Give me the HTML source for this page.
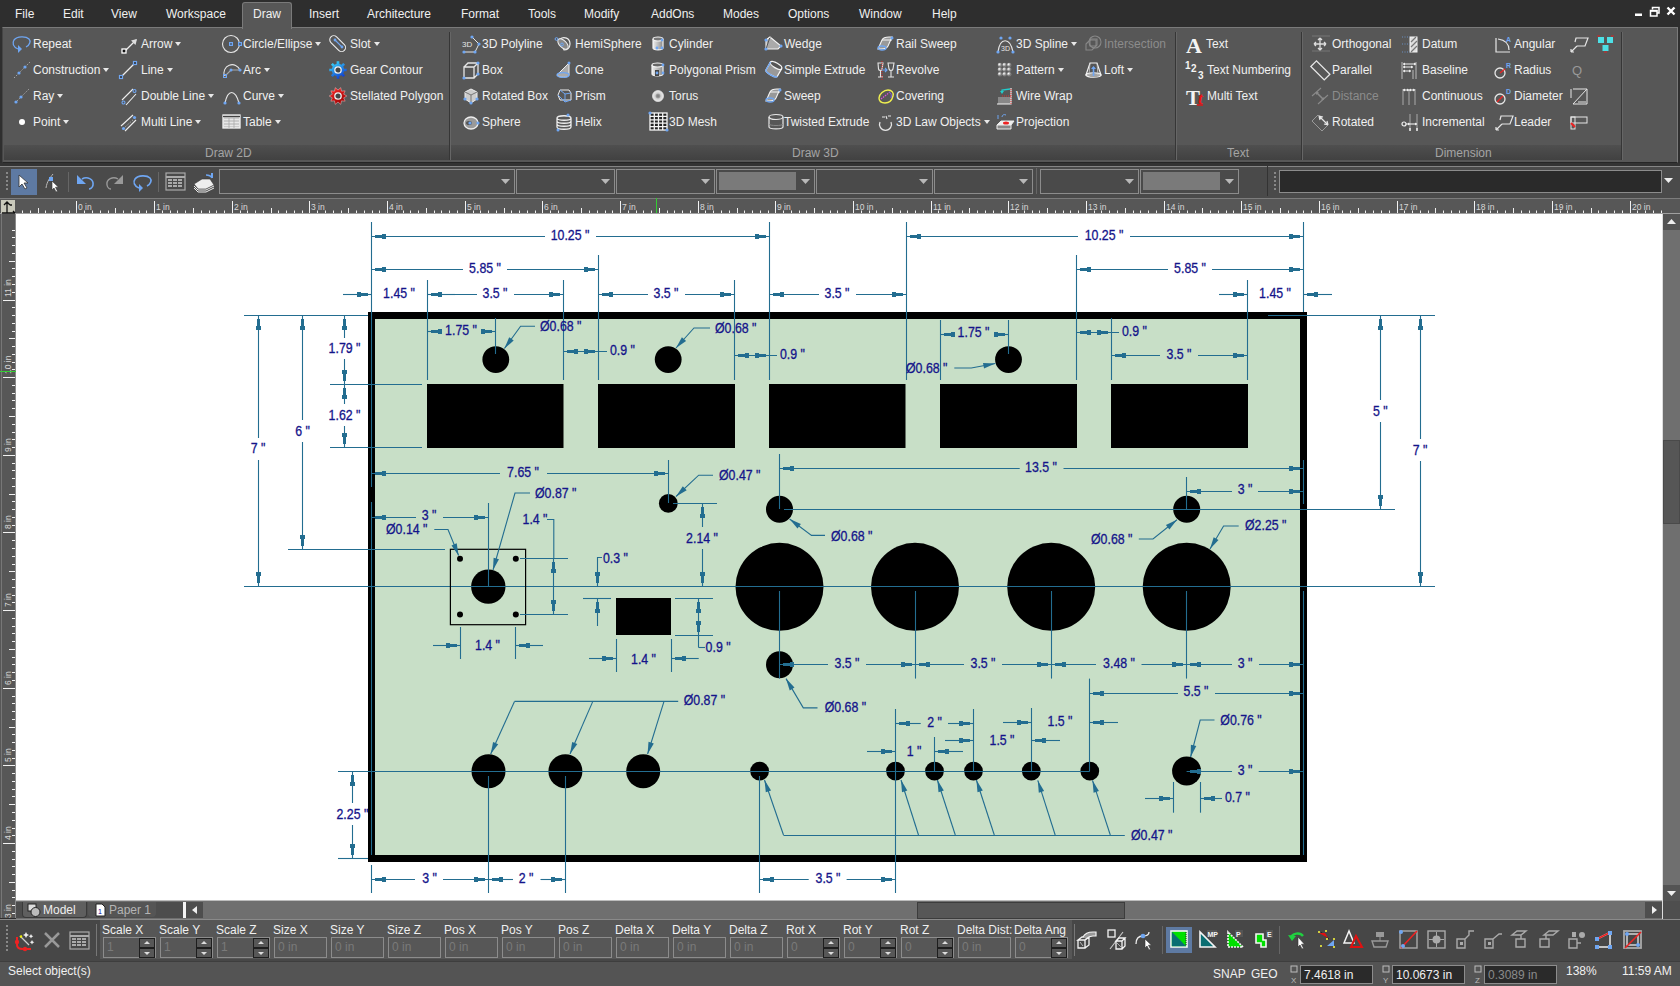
<!DOCTYPE html><html><head><meta charset="utf-8"><style>
*{box-sizing:border-box;margin:0;padding:0}
html,body{width:1680px;height:986px;overflow:hidden;background:#2e2e2e;font-family:"Liberation Sans",sans-serif;font-size:12px;color:#f0f0f0}
.ab{position:absolute}
.t{position:absolute;white-space:nowrap;line-height:14px}
.drw{position:absolute;left:0;top:0}
svg.ic{position:absolute;overflow:visible}
</style></head><body><div class="ab" style="left:0px;top:0px;width:1680px;height:27px;background:#2e2e2e"></div><div class="t" style="left:15px;top:7px;">File</div><div class="t" style="left:63px;top:7px;">Edit</div><div class="t" style="left:111px;top:7px;">View</div><div class="t" style="left:166px;top:7px;">Workspace</div><div class="t" style="left:309px;top:7px;">Insert</div><div class="t" style="left:367px;top:7px;">Architecture</div><div class="t" style="left:461px;top:7px;">Format</div><div class="t" style="left:528px;top:7px;">Tools</div><div class="t" style="left:584px;top:7px;">Modify</div><div class="t" style="left:651px;top:7px;">AddOns</div><div class="t" style="left:723px;top:7px;">Modes</div><div class="t" style="left:788px;top:7px;">Options</div><div class="t" style="left:859px;top:7px;">Window</div><div class="t" style="left:932px;top:7px;">Help</div><svg class="ic" style="left:1634px;top:0px" width="46" height="20" viewBox="0 0 46 20"><rect x="1" y="13.5" width="7" height="2.5" fill="#fff"/><path d="M18.5 9.5V7.5h6.5v5.5h-2" fill="none" stroke="#fff" stroke-width="1.5"/><rect x="16.5" y="10.5" width="6.5" height="5.5" fill="none" stroke="#fff" stroke-width="1.5"/><rect x="16" y="10" width="7.5" height="1.8" fill="#fff"/><path d="M33.5 7.5l7 7M40.5 7.5l-7 7" stroke="#fff" stroke-width="2.4"/></svg><div class="ab" style="left:0px;top:27px;width:1680px;height:139px;background:#2f2f2f"></div><div class="ab" style="left:2px;top:27px;width:1676px;height:136px;background:#575757;border:1px solid #7a7a7a;border-left-color:#454545;border-bottom:1px solid #262626"></div><div class="ab" style="left:242px;top:2px;width:50px;height:27px;background:#575757;border:1px solid #7a7a7a;border-bottom:none;border-radius:3px 3px 0 0"></div><div class="t" style="left:253px;top:7px;">Draw</div><div class="ab" style="left:4px;top:145px;width:1617px;height:15px;background:linear-gradient(#4f4f4f,#414141)"></div><div class="ab" style="left:449px;top:32px;width:2px;height:128px;background:#363636;border-right:1px solid #666"></div><div class="ab" style="left:1175px;top:32px;width:2px;height:128px;background:#363636;border-right:1px solid #666"></div><div class="ab" style="left:1301px;top:32px;width:2px;height:128px;background:#363636;border-right:1px solid #666"></div><div class="ab" style="left:1621px;top:32px;width:2px;height:128px;background:#363636;border-right:1px solid #666"></div><div class="t" style="left:205px;top:146px;color:#a4a4a4">Draw 2D</div><div class="t" style="left:792px;top:146px;color:#a4a4a4">Draw 3D</div><div class="t" style="left:1227px;top:146px;color:#a4a4a4">Text</div><div class="t" style="left:1435px;top:146px;color:#a4a4a4">Dimension</div><svg class="ic" style="left:12px;top:35px" width="20" height="18" viewBox="0 0 20 18"><path d="M6 14C1 12 0 8 2 5 5 1 14 1 17 4c2 2 1 6-3 8" fill="none" stroke="#6fa6f2" stroke-width="1.3"/><path d="M6 10v8l4-4z" fill="#6fa6f2"/></svg><div class="t" style="left:33px;top:37px;">Repeat</div><svg class="ic" style="left:12px;top:61px" width="20" height="18" viewBox="0 0 20 18"><path d="M2 17L18 1" stroke="#aaa" stroke-width="1" stroke-dasharray="1.5 1.5"/><circle cx="7" cy="12" r="1.6" fill="#6fa6f2"/><circle cx="13" cy="6" r="1.6" fill="#6fa6f2"/></svg><div class="t" style="left:33px;top:63px;">Construction<span style="display:inline-block;width:0;height:0;border-left:3.5px solid transparent;border-right:3.5px solid transparent;border-top:4px solid #e8e8e8;margin-left:3px;vertical-align:2px"></span></div><svg class="ic" style="left:12px;top:87px" width="20" height="18" viewBox="0 0 20 18"><path d="M3 16L17 2" stroke="#aaa" stroke-width="1" stroke-dasharray="1.5 1.5"/><circle cx="4" cy="15" r="1.6" fill="#6fa6f2"/><circle cx="9" cy="10" r="1.6" fill="#6fa6f2"/></svg><div class="t" style="left:33px;top:89px;">Ray<span style="display:inline-block;width:0;height:0;border-left:3.5px solid transparent;border-right:3.5px solid transparent;border-top:4px solid #e8e8e8;margin-left:3px;vertical-align:2px"></span></div><svg class="ic" style="left:12px;top:113px" width="20" height="18" viewBox="0 0 20 18"><circle cx="10" cy="9" r="3" fill="#fff"/></svg><div class="t" style="left:33px;top:115px;">Point<span style="display:inline-block;width:0;height:0;border-left:3.5px solid transparent;border-right:3.5px solid transparent;border-top:4px solid #e8e8e8;margin-left:3px;vertical-align:2px"></span></div><svg class="ic" style="left:123px;top:36.5px" width="20" height="18" viewBox="0 0 20 18"><path d="M2 14L13 3" stroke="#eee" stroke-width="1.2"/><path d="M14 2l-6 1.5 4.5 4.5z" fill="#ddd"/><rect x="-1" y="12" width="4" height="4" fill="#111" stroke="#fff" stroke-width="1.3"/></svg><div class="t" style="left:141px;top:37px;">Arrow<span style="display:inline-block;width:0;height:0;border-left:3.5px solid transparent;border-right:3.5px solid transparent;border-top:4px solid #e8e8e8;margin-left:3px;vertical-align:2px"></span></div><svg class="ic" style="left:123px;top:62.5px" width="20" height="18" viewBox="0 0 20 18"><path d="M-2 14L12 0" stroke="#eee" stroke-width="1.2"/><rect x="-3.5" y="12.5" width="3" height="3" fill="#333" stroke="#6fa6f2" stroke-width="1.2"/><rect x="10.5" y="-1.5" width="3" height="3" fill="#333" stroke="#6fa6f2" stroke-width="1.2"/></svg><div class="t" style="left:141px;top:63px;">Line<span style="display:inline-block;width:0;height:0;border-left:3.5px solid transparent;border-right:3.5px solid transparent;border-top:4px solid #e8e8e8;margin-left:3px;vertical-align:2px"></span></div><svg class="ic" style="left:123px;top:88.5px" width="20" height="18" viewBox="0 0 20 18"><path d="M-1 11L10 0M3 16L13 5" stroke="#eee" stroke-width="1.1"/><circle cx="0.5" cy="13.5" r="1.5" fill="none" stroke="#6fa6f2" stroke-width="1.1"/><circle cx="11.5" cy="2" r="1.5" fill="none" stroke="#6fa6f2" stroke-width="1.1"/></svg><div class="t" style="left:141px;top:89px;">Double Line<span style="display:inline-block;width:0;height:0;border-left:3.5px solid transparent;border-right:3.5px solid transparent;border-top:4px solid #e8e8e8;margin-left:3px;vertical-align:2px"></span></div><svg class="ic" style="left:123px;top:114.5px" width="20" height="18" viewBox="0 0 20 18"><path d="M-2 11L10 0M2 16L13 5" stroke="#eee" stroke-width="1.1"/><path d="M0 14L12 3" stroke="#ccc" stroke-dasharray="1 1.5"/><circle cx="0.5" cy="13.5" r="1.6" fill="#6fa6f2"/><circle cx="11.5" cy="2.5" r="1.6" fill="#6fa6f2"/></svg><div class="t" style="left:141px;top:115px;">Multi Line<span style="display:inline-block;width:0;height:0;border-left:3.5px solid transparent;border-right:3.5px solid transparent;border-top:4px solid #e8e8e8;margin-left:3px;vertical-align:2px"></span></div><svg class="ic" style="left:222px;top:35px" width="20" height="18" viewBox="0 0 20 18"><circle cx="9" cy="9" r="8.5" fill="none" stroke="#e6e6e6" stroke-width="1.1"/><rect x="7" y="7" width="4" height="4" fill="#6fa6f2"/><rect x="8.3" y="8.3" width="1.4" height="1.4" fill="#333"/><rect x="16" y="7" width="4" height="4" fill="#6fa6f2"/><rect x="17.3" y="8.3" width="1.4" height="1.4" fill="#333"/></svg><div class="t" style="left:243px;top:37px;">Circle/Ellipse<span style="display:inline-block;width:0;height:0;border-left:3.5px solid transparent;border-right:3.5px solid transparent;border-top:4px solid #e8e8e8;margin-left:3px;vertical-align:2px"></span></div><svg class="ic" style="left:222px;top:61px" width="20" height="18" viewBox="0 0 20 18"><path d="M2.5 15A8 8 0 1 1 18 9" fill="none" stroke="#e6e6e6" stroke-width="1.1"/><path d="M3 15L9 9H18" stroke="#aaa" stroke-width="1.1" fill="none"/><rect x="1.5" y="13.5" width="3" height="3" fill="none" stroke="#6fa6f2"/><circle cx="9" cy="9" r="1.5" fill="#6fa6f2"/><circle cx="18" cy="9" r="1.6" fill="#6fa6f2"/></svg><div class="t" style="left:243px;top:63px;">Arc<span style="display:inline-block;width:0;height:0;border-left:3.5px solid transparent;border-right:3.5px solid transparent;border-top:4px solid #e8e8e8;margin-left:3px;vertical-align:2px"></span></div><svg class="ic" style="left:222px;top:87px" width="20" height="18" viewBox="0 0 20 18"><path d="M3 16C6 2 13 2 17 16" fill="none" stroke="#e6e6e6" stroke-width="1.2"/><circle cx="3" cy="16" r="1.6" fill="#6fa6f2"/><circle cx="17" cy="16" r="1.6" fill="#6fa6f2"/></svg><div class="t" style="left:243px;top:89px;">Curve<span style="display:inline-block;width:0;height:0;border-left:3.5px solid transparent;border-right:3.5px solid transparent;border-top:4px solid #e8e8e8;margin-left:3px;vertical-align:2px"></span></div><svg class="ic" style="left:222px;top:113px" width="20" height="18" viewBox="0 0 20 18"><rect x="1" y="2" width="17" height="13" fill="#ccc" stroke="#f4f4f4" stroke-width="1.3"/><path d="M1 3.5h17" stroke="#444" stroke-width="1.3"/><path d="M2 6.5h15M2 9.5h15M2 12.5h15" stroke="#e8e8e8" stroke-width="1.2"/><path d="M7 5v10M12 5v10" stroke="#aaa" stroke-width="0.8"/></svg><div class="t" style="left:243px;top:115px;">Table<span style="display:inline-block;width:0;height:0;border-left:3.5px solid transparent;border-right:3.5px solid transparent;border-top:4px solid #e8e8e8;margin-left:3px;vertical-align:2px"></span></div><svg class="ic" style="left:329px;top:35px" width="20" height="18" viewBox="0 0 20 18"><rect x="5" y="-1" width="8" height="19" rx="4" transform="rotate(-45 9 9)" fill="none" stroke="#eee" stroke-width="1.1"/><path d="M6 5l7 7" stroke="#6fa6f2" stroke-width="1.1"/><circle cx="6" cy="5" r="1.4" fill="#6fa6f2"/><circle cx="13" cy="12" r="1.4" fill="#6fa6f2"/></svg><div class="t" style="left:350px;top:37px;">Slot<span style="display:inline-block;width:0;height:0;border-left:3.5px solid transparent;border-right:3.5px solid transparent;border-top:4px solid #e8e8e8;margin-left:3px;vertical-align:2px"></span></div><svg class="ic" style="left:329px;top:61px" width="20" height="18" viewBox="0 0 20 18"><defs><linearGradient id="ggr" x1="0" y1="0" x2="0.6" y2="1"><stop offset="0" stop-color="#40e8ff"/><stop offset="1" stop-color="#1040d0"/></linearGradient></defs><path d="M15.15 7.65L17.70 7.67L17.70 10.33L15.15 10.35L14.31 12.40L16.09 14.21L14.21 16.09L12.40 14.31L10.35 15.15L10.33 17.70L7.67 17.70L7.65 15.15L5.60 14.31L3.79 16.09L1.91 14.21L3.69 12.40L2.85 10.35L0.30 10.33L0.30 7.67L2.85 7.65L3.69 5.60L1.91 3.79L3.79 1.91L5.60 3.69L7.65 2.85L7.67 0.30L10.33 0.30L10.35 2.85L12.40 3.69L14.21 1.91L16.09 3.79L14.31 5.60Z" fill="url(#ggr)"/><circle cx="9" cy="9" r="3.2" fill="#444" stroke="#eee" stroke-width="1.3"/></svg><div class="t" style="left:350px;top:63px;">Gear Contour</div><svg class="ic" style="left:329px;top:87px" width="20" height="18" viewBox="0 0 20 18"><defs><linearGradient id="gst" x1="0" y1="0" x2="0.6" y2="1"><stop offset="0" stop-color="#ff3030"/><stop offset="1" stop-color="#a00000"/></linearGradient></defs><path d="M17.80 9.00L14.71 10.85L16.12 14.17L12.53 13.85L11.72 17.37L9.00 15.00L6.28 17.37L5.47 13.85L1.88 14.17L3.29 10.85L0.20 9.00L3.29 7.15L1.88 3.83L5.47 4.15L6.28 0.63L9.00 3.00L11.72 0.63L12.53 4.15L16.12 3.83L14.71 7.15Z" fill="url(#gst)" stroke="#f4c0c0" stroke-width="0.5"/><circle cx="9" cy="9" r="3.2" fill="#444" stroke="#eee" stroke-width="1.3"/></svg><div class="t" style="left:350px;top:89px;">Stellated Polygon</div><svg class="ic" style="left:462px;top:35px" width="20" height="18" viewBox="0 0 20 18"><text x="0" y="12" font-size="8" fill="#e6e6e6" font-family="Liberation Sans">3D</text><path d="M10 2l7 7-4 8H2" fill="none" stroke="#e6e6e6"/><circle cx="10" cy="2" r="1.6" fill="#6fa6f2"/><circle cx="17" cy="9" r="1.6" fill="#6fa6f2"/><circle cx="13" cy="17" r="1.6" fill="#6fa6f2"/><circle cx="2" cy="17" r="1.6" fill="#6fa6f2"/></svg><div class="t" style="left:482px;top:37px;">3D Polyline</div><svg class="ic" style="left:462px;top:61px" width="20" height="18" viewBox="0 0 20 18"><path d="M2 6h10v11H2zM2 6l4-4h10v11l-4 4M12 6l4-4" fill="none" stroke="#e6e6e6" stroke-width="1.3"/><circle cx="2" cy="17" r="1.6" fill="#6fa6f2"/><circle cx="16" cy="2" r="1.6" fill="#6fa6f2"/><circle cx="16" cy="13" r="1.6" fill="#6fa6f2"/></svg><div class="t" style="left:482px;top:63px;">Box</div><svg class="ic" style="left:462px;top:87px" width="20" height="18" viewBox="0 0 20 18"><path d="M9 2l6 3v7l-6 4-6-4V5z" fill="#ccc" stroke="#eee"/><path d="M3 5l6 3 6-3M9 8v8" stroke="#777" fill="none"/><circle cx="3" cy="12" r="1.6" fill="#6fa6f2"/><circle cx="15" cy="12" r="1.6" fill="#6fa6f2"/><circle cx="9" cy="16" r="1.6" fill="#6fa6f2"/></svg><div class="t" style="left:482px;top:89px;">Rotated Box</div><svg class="ic" style="left:462px;top:113px" width="20" height="18" viewBox="0 0 20 18"><ellipse cx="9" cy="10" rx="7" ry="6" fill="#9a9a9a" stroke="#eee" stroke-width="1.3"/><ellipse cx="7" cy="10" rx="3" ry="2" fill="#555"/><circle cx="8" cy="10" r="1.6" fill="#6fa6f2"/><circle cx="16" cy="10" r="1.6" fill="#6fa6f2"/></svg><div class="t" style="left:482px;top:115px;">Sphere</div><svg class="ic" style="left:555px;top:35px" width="20" height="18" viewBox="0 0 20 18"><path d="M5 4C9 1 15 3 15 9c0 4-3 6-6 6z" fill="none" stroke="#eee" stroke-width="1.2"/><ellipse cx="8" cy="9" rx="6.5" ry="3.5" transform="rotate(45 8 9)" fill="#888" stroke="#eee" stroke-width="1"/><circle cx="1.5" cy="4" r="1.4" fill="none" stroke="#6fa6f2"/><circle cx="7" cy="9.5" r="1.4" fill="none" stroke="#6fa6f2"/></svg><div class="t" style="left:575px;top:37px;">HemiSphere</div><svg class="ic" style="left:555px;top:61px" width="20" height="18" viewBox="0 0 20 18"><path d="M14 2L2 14c1 3 12 3 12 0z" fill="#aaa" stroke="#eee" stroke-width="1"/><ellipse cx="8" cy="14" rx="6" ry="2.3" fill="none" stroke="#6fa6f2" stroke-width="1.3"/><circle cx="14" cy="2" r="1.5" fill="#6fa6f2"/></svg><div class="t" style="left:575px;top:63px;">Cone</div><svg class="ic" style="left:555px;top:87px" width="20" height="18" viewBox="0 0 20 18"><path d="M5 3h9l2 3v7H5l-2-5z" fill="none" stroke="#eee" stroke-width="1"/><path d="M5 3l5 4 6-1M10 7v8M3 8l7 7 6-2" fill="none" stroke="#6fa6f2" stroke-width="1"/></svg><div class="t" style="left:575px;top:89px;">Prism</div><svg class="ic" style="left:555px;top:113px" width="20" height="18" viewBox="0 0 20 18"><path d="M2 5c0-3 14-3 14 0s-14 3-14 0M2 8c0 3 14 3 14 0M2 11c0 3 14 3 14 0M2 14c0 3 14 3 14 0M2 5v9M16 5v9" fill="none" stroke="#eee" stroke-width="1.3"/><circle cx="13" cy="2" r="1.5" fill="#6fa6f2"/><circle cx="3" cy="17" r="1.5" fill="#6fa6f2"/></svg><div class="t" style="left:575px;top:115px;">Helix</div><svg class="ic" style="left:649px;top:35px" width="20" height="18" viewBox="0 0 20 18"><defs><linearGradient id="gcy" x1="0" x2="1"><stop offset="0" stop-color="#eee"/><stop offset="1" stop-color="#888"/></linearGradient></defs><path d="M4 4v9c0 2.5 10 2.5 10 0V4" fill="url(#gcy)" stroke="#f4f4f4" stroke-width="1.2"/><ellipse cx="9" cy="4" rx="5" ry="2" fill="#777" stroke="#f4f4f4" stroke-width="1.2"/><circle cx="13" cy="5" r="1.4" fill="#6fa6f2"/><circle cx="8" cy="13" r="1.4" fill="#6fa6f2"/><circle cx="13" cy="13" r="1.4" fill="#6fa6f2"/></svg><div class="t" style="left:669px;top:37px;">Cylinder</div><svg class="ic" style="left:649px;top:61px" width="20" height="18" viewBox="0 0 20 18"><path d="M3 4v9c0 2.5 11 2.5 11 0V4" fill="url(#gcy)" stroke="#f4f4f4" stroke-width="1.2"/><ellipse cx="8.5" cy="4" rx="5.5" ry="2" fill="#666" stroke="#f4f4f4" stroke-width="1.2"/><path d="M6 9h4v6H6z" fill="#444"/><circle cx="14" cy="4" r="1.4" fill="#6fa6f2"/><circle cx="14" cy="12" r="1.4" fill="#6fa6f2"/><circle cx="8" cy="12" r="1.4" fill="#6fa6f2"/></svg><div class="t" style="left:669px;top:63px;">Polygonal Prism</div><svg class="ic" style="left:649px;top:87px" width="20" height="18" viewBox="0 0 20 18"><defs><radialGradient id="gto"><stop offset="0" stop-color="#777"/><stop offset="0.35" stop-color="#999"/><stop offset="0.5" stop-color="#ccc"/><stop offset="1" stop-color="#eee"/></radialGradient></defs><circle cx="9" cy="9" r="5.5" fill="url(#gto)" stroke="#ddd" stroke-width="0.8"/></svg><div class="t" style="left:669px;top:89px;">Torus</div><svg class="ic" style="left:649px;top:113px" width="20" height="18" viewBox="0 0 20 18"><rect x="1" y="0" width="17" height="17" fill="#222" stroke="#f4f4f4" stroke-width="1.3"/><path d="M5.3 0v17M9.5 0v17M13.7 0v17M1 3.4h17M1 6.8h17M1 10.2h17M1 13.6h17" stroke="#f4f4f4" stroke-width="1.3"/><circle cx="1" cy="0" r="1.6" fill="#6fa6f2"/><circle cx="18" cy="17" r="1.6" fill="#6fa6f2"/></svg><div class="t" style="left:669px;top:115px;">3D Mesh</div><svg class="ic" style="left:764px;top:35px" width="20" height="18" viewBox="0 0 20 18"><path d="M2 5v9h12l3-3L6 2z" fill="#aaa" stroke="#f4f4f4" stroke-width="1.1"/><path d="M2 14L6 2" stroke="#555" stroke-width="1"/><path d="M2 5l4-3" stroke="#f4f4f4"/><circle cx="2" cy="5" r="1.6" fill="#6fa6f2"/><circle cx="2" cy="14" r="1.6" fill="#6fa6f2"/><circle cx="17" cy="11" r="1.6" fill="#6fa6f2"/></svg><div class="t" style="left:784px;top:37px;">Wedge</div><svg class="ic" style="left:764px;top:61px" width="20" height="18" viewBox="0 0 20 18"><g transform="rotate(30 10 9)"><path d="M3 4v9c0 2.5 13 2.5 13 0V4" fill="#999" stroke="#f4f4f4" stroke-width="1.3"/><ellipse cx="9.5" cy="4" rx="6.5" ry="2.5" fill="#555" stroke="#f4f4f4" stroke-width="1.3"/><path d="M3 13c0 2.5 13 2.5 13 0" fill="none" stroke="#6fa6f2" stroke-width="1.5"/><path d="M3 4v9" stroke="#6fa6f2" stroke-width="1.3"/></g></svg><div class="t" style="left:784px;top:63px;">Simple Extrude</div><svg class="ic" style="left:764px;top:87px" width="20" height="18" viewBox="0 0 20 18"><path d="M2 14l4-9c1-2 4-3 7-3h3l-4 9c-1 2-4 3-7 3z" fill="#999" stroke="#f4f4f4" stroke-width="1.1"/><path d="M6 5h10" stroke="#f4f4f4"/><ellipse cx="6" cy="13" rx="4" ry="2" fill="none" stroke="#6fa6f2" stroke-width="1.3"/><circle cx="16" cy="3" r="1.5" fill="#6fa6f2"/></svg><div class="t" style="left:784px;top:89px;">Sweep</div><svg class="ic" style="left:764px;top:113px" width="20" height="18" viewBox="0 0 20 18"><path d="M5 4v10c0 2.5 14 2.5 14 0V4" fill="none" stroke="#e6e6e6" stroke-width="1.2"/><ellipse cx="12" cy="4" rx="7" ry="2.5" fill="none" stroke="#e6e6e6" stroke-width="1.2"/><path d="M5 11c0 2 14 2 14 0" fill="none" stroke="#888"/></svg><div class="t" style="left:784px;top:115px;">Twisted Extrude</div><svg class="ic" style="left:876px;top:35px" width="20" height="18" viewBox="0 0 20 18"><path d="M2 14l4-9c1-2 4-3 7-3h3l-4 9c-1 2-4 3-7 3z" fill="#999" stroke="#f4f4f4" stroke-width="1.1"/><path d="M6 5h10" stroke="#f4f4f4"/><ellipse cx="6" cy="13" rx="4" ry="2" fill="none" stroke="#6fa6f2" stroke-width="1.3"/><circle cx="16" cy="3" r="1.5" fill="#6fa6f2"/></svg><div class="t" style="left:896px;top:37px;">Rail Sweep</div><svg class="ic" style="left:876px;top:61px" width="20" height="18" viewBox="0 0 20 18"><path d="M2 2h5l-1 6c-.5 2-3 2-3.5 0zM4.5 9v7M2 16h5M12 2h6l-1 6c-.5 2-3.5 2-4 0zM15 9v7M12 16h6" stroke="#e6e6e6" fill="none" stroke-width="1.1"/><path d="M6 0v19" stroke="#d22" stroke-dasharray="1 1"/><path d="M6 9h5M9 7l2 2-2 2" stroke="#6fa6f2" fill="none" stroke-width="1.1"/></svg><div class="t" style="left:896px;top:63px;">Revolve</div><svg class="ic" style="left:876px;top:87px" width="20" height="18" viewBox="0 0 20 18"><path d="M3 11c0-4 5-8 9-8s6 3 5 6c-1 4-4 7-8 7-4 0-6-2-6-5z" fill="none" stroke="#f0f050" stroke-width="1.4"/><path d="M5 12L14 5" stroke="#e050e0" stroke-width="1.2" stroke-dasharray="1.5 1"/><path d="M13 5c2 1 3 3 2 6" stroke="#8060e0" fill="none"/></svg><div class="t" style="left:896px;top:89px;">Covering</div><svg class="ic" style="left:876px;top:113px" width="20" height="18" viewBox="0 0 20 18"><path d="M4 9a6 6 0 1 0 11 0" fill="none" stroke="#e6e6e6" stroke-width="1.3"/><path d="M6 4h3M10 3l1 3M12 3h3" stroke="#e6e6e6" stroke-width="1.1"/></svg><div class="t" style="left:896px;top:115px;">3D Law Objects<span style="display:inline-block;width:0;height:0;border-left:3.5px solid transparent;border-right:3.5px solid transparent;border-top:4px solid #e8e8e8;margin-left:3px;vertical-align:2px"></span></div><svg class="ic" style="left:996px;top:35px" width="20" height="18" viewBox="0 0 20 18"><path d="M2 17C4 2 14 2 17 17" fill="none" stroke="#e6e6e6" stroke-width="1.2"/><text x="5" y="16" font-size="7" fill="#e6e6e6" font-family="Liberation Sans">3D</text><circle cx="5" cy="3" r="1.6" fill="#6fa6f2"/><circle cx="14" cy="3" r="1.6" fill="#6fa6f2"/><circle cx="2" cy="17" r="1.6" fill="#6fa6f2"/><circle cx="17" cy="17" r="1.6" fill="#6fa6f2"/></svg><div class="t" style="left:1016px;top:37px;">3D Spline<span style="display:inline-block;width:0;height:0;border-left:3.5px solid transparent;border-right:3.5px solid transparent;border-top:4px solid #e8e8e8;margin-left:3px;vertical-align:2px"></span></div><svg class="ic" style="left:996px;top:61px" width="20" height="18" viewBox="0 0 20 18"><defs><radialGradient id="gsp" cx="0.35" cy="0.35"><stop offset="0" stop-color="#fff"/><stop offset="1" stop-color="#777"/></radialGradient></defs><circle cx="4.0" cy="4.0" r="2.3" fill="url(#gsp)"/><circle cx="4.0" cy="8.6" r="2.3" fill="url(#gsp)"/><circle cx="4.0" cy="13.2" r="2.3" fill="url(#gsp)"/><circle cx="8.6" cy="4.0" r="2.3" fill="url(#gsp)"/><circle cx="8.6" cy="8.6" r="2.3" fill="url(#gsp)"/><circle cx="8.6" cy="13.2" r="2.3" fill="url(#gsp)"/><circle cx="13.2" cy="4.0" r="2.3" fill="url(#gsp)"/><circle cx="13.2" cy="8.6" r="2.3" fill="url(#gsp)"/><circle cx="13.2" cy="13.2" r="2.3" fill="url(#gsp)"/></svg><div class="t" style="left:1016px;top:63px;">Pattern<span style="display:inline-block;width:0;height:0;border-left:3.5px solid transparent;border-right:3.5px solid transparent;border-top:4px solid #e8e8e8;margin-left:3px;vertical-align:2px"></span></div><svg class="ic" style="left:996px;top:87px" width="20" height="18" viewBox="0 0 20 18"><path d="M2 10h13v7H2z" fill="#888"/><path d="M1 17h14V1" fill="none" stroke="#f4f4f4" stroke-width="1.2"/><path d="M6 5V3l8-1" fill="none" stroke="#2cc" stroke-width="1.3"/><path d="M4 4h4l-2 3z" fill="#2cc"/><path d="M6 9h9M15 2v15" stroke="#d33" stroke-dasharray="1 1"/></svg><div class="t" style="left:1016px;top:89px;">Wire Wrap</div><svg class="ic" style="left:996px;top:113px" width="20" height="18" viewBox="0 0 20 18"><path d="M1 12l4-4h13l-3 4z" fill="#eee" stroke="#eee"/><path d="M1 12h14v4H1z" fill="#888" stroke="#eee"/><ellipse cx="10" cy="10" rx="3" ry="1.5" fill="#e22"/><path d="M10 2c-2-1-4 0-4 2M2 2v4" stroke="#6fa6f2" fill="none"/></svg><div class="t" style="left:1016px;top:115px;">Projection</div><svg class="ic" style="left:1084px;top:35px" width="20" height="18" viewBox="0 0 20 18"><path d="M2 9l5-5h6v6l-5 5H2z" fill="none" stroke="#888" stroke-width="1.1"/><circle cx="11" cy="7" r="6" fill="none" stroke="#888" stroke-width="1.1"/><rect x="6" y="5" width="6" height="6" fill="none" stroke="#888"/></svg><div class="t" style="left:1104px;top:37px;color:#8c8c8c;">Intersection</div><svg class="ic" style="left:1084px;top:61px" width="20" height="18" viewBox="0 0 20 18"><path d="M6 2h7l4 12H2z" fill="#555" stroke="#f4f4f4" stroke-width="1.2"/><ellipse cx="9.5" cy="14" rx="7.5" ry="2.2" fill="none" stroke="#f4f4f4" stroke-width="1.2"/><path d="M6 2l-1 12M13 2l1 12" stroke="#ccc" stroke-width="0.8"/><path d="M9.5 15V6" stroke="#6fa6f2" stroke-width="1.6"/><path d="M7 8l2.5-3 2.5 3z" fill="#6fa6f2"/></svg><div class="t" style="left:1104px;top:63px;">Loft<span style="display:inline-block;width:0;height:0;border-left:3.5px solid transparent;border-right:3.5px solid transparent;border-top:4px solid #e8e8e8;margin-left:3px;vertical-align:2px"></span></div><svg class="ic" style="left:1186px;top:35px" width="20" height="18" viewBox="0 0 20 18"><text x="0" y="18" font-size="22" fill="#f4f4f4" font-family="Liberation Serif" font-weight="bold">A</text></svg><div class="t" style="left:1206px;top:37px;">Text</div><svg class="ic" style="left:1185px;top:61px" width="20" height="18" viewBox="0 0 20 18"><text x="0" y="8" font-size="10" fill="#f4f4f4" font-weight="bold" font-family="Liberation Sans">1</text><text x="6" y="11" font-size="10" fill="#f4f4f4" font-weight="bold" font-family="Liberation Sans">2</text><text x="13" y="18" font-size="10" fill="#f4f4f4" font-weight="bold" font-family="Liberation Sans">3</text></svg><div class="t" style="left:1207px;top:63px;">Text Numbering</div><svg class="ic" style="left:1186px;top:87px" width="20" height="18" viewBox="0 0 20 18"><text x="0" y="18" font-size="21" fill="#f4f4f4" font-weight="bold" font-family="Liberation Serif">T</text><text x="12" y="17" font-size="17" fill="#f01010" font-style="italic" font-weight="bold" font-family="Liberation Serif">t</text><path d="M11 18h6" stroke="#f01010" stroke-width="1.3"/></svg><div class="t" style="left:1207px;top:89px;">Multi Text</div><svg class="ic" style="left:1311px;top:35px" width="20" height="18" viewBox="0 0 20 18"><path d="M1 1h18M1 16h18" stroke="#777" stroke-width="1"/><path d="M9 3v12M3 9h12M9 3l-2 2M9 3l2 2M9 15l-2-2M9 15l2-2M3 9l2-2M3 9l2 2M15 9l-2-2M15 9l-2 2" stroke="#ddd" fill="none" stroke-width="1.3"/></svg><div class="t" style="left:1332px;top:37px;">Orthogonal</div><svg class="ic" style="left:1311px;top:61px" width="20" height="18" viewBox="0 0 20 18"><rect x="5" y="0" width="8" height="19" transform="rotate(-45 9 9)" fill="none" stroke="#e6e6e6" stroke-width="1.3"/></svg><div class="t" style="left:1332px;top:63px;">Parallel</div><svg class="ic" style="left:1311px;top:87px" width="20" height="18" viewBox="0 0 20 18"><path d="M1 9L10 1M7 17L17 8" stroke="#8a8a8a" stroke-width="1.1"/><path d="M6 6l6 6" stroke="#8a8a8a" stroke-width="1.6"/><path d="M5 5l3 0-3 3zM13 13l-3 0 3-3z" fill="#8a8a8a"/></svg><div class="t" style="left:1332px;top:89px;color:#8c8c8c;">Distance</div><svg class="ic" style="left:1311px;top:113px" width="20" height="18" viewBox="0 0 20 18"><path d="M1 8l6-6 10 10-6 6z" fill="none" stroke="#999"/><path d="M8 3l9 9M8 3l1 4M8 3l4 1M17 12l-4-1M17 12l-1-4" stroke="#e6e6e6" stroke-width="1.2" fill="none"/></svg><div class="t" style="left:1332px;top:115px;">Rotated</div><svg class="ic" style="left:1401px;top:35px" width="20" height="18" viewBox="0 0 20 18"><rect x="9" y="2" width="7" height="15" fill="#ddd" stroke="#f4f4f4"/><path d="M10 7l5-5M10 12l6-6M10 17l6-6" stroke="#777" stroke-width="1.2"/><path d="M1 2h8M1 9h8M1 17h8" stroke="#6a8fc0" stroke-dasharray="1 1.5"/></svg><div class="t" style="left:1422px;top:37px;">Datum</div><svg class="ic" style="left:1401px;top:61px" width="20" height="18" viewBox="0 0 20 18"><path d="M1 1v17M12 9v9M15 1v17" stroke="#bbb" stroke-width="1"/><path d="M2 3h13M2 6h10M2 10h8" stroke="#f0f0f0" stroke-width="1.2"/><path d="M2 3l2-1.5v3zM15 3l-2-1.5v3zM2 6l2-1.5v3zM12 6l-2-1.5v3zM2 10l2-1.5v3zM10 10l-2-1.5v3z" fill="#f0f0f0"/></svg><div class="t" style="left:1422px;top:63px;">Baseline</div><svg class="ic" style="left:1401px;top:87px" width="20" height="18" viewBox="0 0 20 18"><path d="M2 2v16M8 3v15M14 2v16" stroke="#aaa" stroke-width="1"/><path d="M2 3h12" stroke="#f0f0f0" stroke-width="1.1"/><path d="M2 3l2-1.5v3zM8 3l-2-1.5v3zM8 3l2-1.5v3zM14 3l-2-1.5v3z" fill="#f0f0f0"/></svg><div class="t" style="left:1422px;top:89px;">Continuous</div><svg class="ic" style="left:1401px;top:113px" width="20" height="18" viewBox="0 0 20 18"><path d="M9 1v16M16 1v16" stroke="#aaa" stroke-width="1"/><circle cx="3" cy="11" r="2" fill="none" stroke="#f0f0f0" stroke-width="1.2"/><path d="M5 11h11" stroke="#f0f0f0" stroke-width="1.1"/><path d="M9 11l-2-1.5v3zM16 11l-2-1.5v3z" fill="#f0f0f0"/><path d="M9 15v3M16 15v3" stroke="#f0f0f0" stroke-width="1.5"/></svg><div class="t" style="left:1422px;top:115px;">Incremental</div><svg class="ic" style="left:1494px;top:35px" width="20" height="18" viewBox="0 0 20 18"><path d="M2 3v14h14M4 4c7 1 11 5 11 11" stroke="#e6e6e6" fill="none" stroke-width="1.2"/><text x="12" y="7" font-size="7" fill="#6fa6f2" font-weight="bold" font-family="Liberation Sans">A</text></svg><div class="t" style="left:1514px;top:37px;">Angular</div><svg class="ic" style="left:1494px;top:61px" width="20" height="18" viewBox="0 0 20 18"><circle cx="6" cy="12" r="5" fill="none" stroke="#e6e6e6" stroke-width="1.3"/><path d="M6 12l5-4" stroke="#e22" stroke-width="1.3"/><text x="12" y="7" font-size="7" fill="#6fa6f2" font-weight="bold" font-family="Liberation Sans">R</text></svg><div class="t" style="left:1514px;top:63px;">Radius</div><svg class="ic" style="left:1494px;top:87px" width="20" height="18" viewBox="0 0 20 18"><circle cx="6" cy="12" r="5" fill="none" stroke="#e6e6e6" stroke-width="1.3"/><path d="M3 15l6-6" stroke="#e22" stroke-width="1.3"/><text x="12" y="7" font-size="7" fill="#6fa6f2" font-weight="bold" font-family="Liberation Sans">D</text></svg><div class="t" style="left:1514px;top:89px;">Diameter</div><svg class="ic" style="left:1494px;top:113px" width="20" height="18" viewBox="0 0 20 18"><path d="M2 17l6-6M2 17v-3M2 17h3M8 11h8l3-8H7l-1 4" stroke="#e6e6e6" fill="none" stroke-width="1.2"/></svg><div class="t" style="left:1514px;top:115px;">Leader</div><svg class="ic" style="left:1569px;top:35px" width="20" height="18" viewBox="0 0 20 18"><path d="M2 17l6-6M2 17v-3M2 17h3M8 11h8l3-8H7l-1 4" stroke="#e6e6e6" fill="none" stroke-width="1.2"/></svg><div class="t" style="left:0px;top:37px;"></div><svg class="ic" style="left:1570px;top:61px" width="20" height="18" viewBox="0 0 20 18"><text x="2" y="14" font-size="13" fill="#999" font-family="Liberation Sans">Q</text></svg><div class="t" style="left:0px;top:63px;"></div><svg class="ic" style="left:1569px;top:87px" width="20" height="18" viewBox="0 0 20 18"><path d="M4 2h14v15H4M18 2L4 17M2 2v9M9 15h8" stroke="#e6e6e6" fill="none"/></svg><div class="t" style="left:0px;top:89px;"></div><svg class="ic" style="left:1569px;top:113px" width="20" height="18" viewBox="0 0 20 18"><rect x="2" y="4" width="16" height="6" fill="none" stroke="#e6e6e6"/><rect x="2" y="4" width="4" height="12" fill="none" stroke="#e6e6e6"/><path d="M2 10l4 4" stroke="#e22" stroke-width="2"/></svg><div class="t" style="left:0px;top:115px;"></div><svg class="ic" style="left:1597px;top:35px" width="20" height="18" viewBox="0 0 20 18"><rect x="1" y="2" width="6" height="6" fill="#4de0e6"/><rect x="10" y="2" width="6" height="6" fill="#4de0e6"/><rect x="5.5" y="10" width="6" height="6" fill="#4de0e6"/><path d="M0 1h3M14 1h3M7 17h3" stroke="#d22"/></svg><div class="t" style="left:0px;top:37px;"></div><div class="ab" style="left:0px;top:163px;width:1680px;height:3px;background:#333"></div><div class="ab" style="left:0px;top:166px;width:1680px;height:33px;background:#4a4a4a;border-top:1px solid #858585;border-bottom:1px solid #3c3c3c"></div><div class="ab" style="left:6px;top:172px;width:2px;height:2px;background:#888"></div><div class="ab" style="left:6px;top:176px;width:2px;height:2px;background:#888"></div><div class="ab" style="left:6px;top:180px;width:2px;height:2px;background:#888"></div><div class="ab" style="left:6px;top:184px;width:2px;height:2px;background:#888"></div><div class="ab" style="left:6px;top:188px;width:2px;height:2px;background:#888"></div><div class="ab" style="left:11px;top:169px;width:26px;height:26px;background:#5e7aa3"></div><svg class="ic" style="left:17px;top:174px" width="14" height="16" viewBox="0 0 14 16"><path d="M2 1v12l3-3 3 5 2-1-3-5h4z" fill="#fff" stroke="#333" stroke-width="0.8"/></svg><svg class="ic" style="left:44px;top:172px" width="18" height="20" viewBox="0 0 18 20"><path d="M2 16C3 9 6 6 9 2" fill="none" stroke="#bbb"/><rect x="5" y="5" width="4" height="4" fill="#6fa6f2"/><path d="M8 9v9l2-2 2 4 1.5-.8-2-4h3z" fill="#fff" stroke="#333" stroke-width="0.6"/></svg><div class="ab" style="left:68px;top:172px;width:1px;height:20px;background:#2a2a2a;border-right:1px solid #666"></div><svg class="ic" style="left:76px;top:173px" width="20" height="18" viewBox="0 0 20 18"><path d="M6 6c5-3 12 0 11 6-.5 3-3 4-4 4" fill="none" stroke="#6fa6f2" stroke-width="1.6"/><path d="M1 2v9h9z" fill="#6fa6f2"/></svg><svg class="ic" style="left:104px;top:173px" width="20" height="18" viewBox="0 0 20 18"><path d="M14 6c-5-3-12 0-11 6 .5 3 3 4 4 4" fill="none" stroke="#999" stroke-width="1.4"/><path d="M19 2v9H10z" fill="#999"/></svg><svg class="ic" style="left:132px;top:173px" width="20" height="20" viewBox="0 0 20 20"><path d="M7 15C2 13 1 9 3 6 6 2 15 2 18 5c2 2 1 6-3 8" fill="none" stroke="#6fa6f2" stroke-width="1.6"/><path d="M7 11v8l4-4z" fill="#6fa6f2"/></svg><div class="ab" style="left:158px;top:172px;width:1px;height:20px;background:#2a2a2a;border-right:1px solid #666"></div><svg class="ic" style="left:165px;top:172px" width="22" height="20" viewBox="0 0 22 20"><rect x="1" y="1" width="19" height="17" fill="none" stroke="#aaa" stroke-width="1.2"/><path d="M1 5h19" stroke="#aaa" stroke-width="2"/><path d="M3 8h15M3 11h15M3 14h15" stroke="#aaa" stroke-width="2" stroke-dasharray="4 1"/></svg><svg class="ic" style="left:193px;top:171px" width="22" height="22" viewBox="0 0 22 22"><path d="M1 13l8-5h8l4 6-8 4H5z" fill="#eee" stroke="#333" stroke-width="0.6"/><path d="M1 15l4 4h8l8-4M1 17l4 4h8l8-4" stroke="#eee" fill="none"/><path d="M13 4c3 0 5 1 6 3" stroke="#6fa6f2" stroke-width="1.4" fill="none"/><rect x="18" y="2" width="2" height="5" fill="#6fa6f2"/></svg><div class="ab" style="left:219px;top:169px;width:296px;height:25px;border:1px solid #8c8c8c;background:#4a4a4a"></div><svg class="ic" style="left:501px;top:179px" width="9" height="5" viewBox="0 0 9 5"><path d="M0 0h9L4.5 5z" fill="#b8b8b8"/></svg><div class="ab" style="left:516px;top:169px;width:99px;height:25px;border:1px solid #8c8c8c;background:#4a4a4a"></div><svg class="ic" style="left:601px;top:179px" width="9" height="5" viewBox="0 0 9 5"><path d="M0 0h9L4.5 5z" fill="#b8b8b8"/></svg><div class="ab" style="left:616px;top:169px;width:99px;height:25px;border:1px solid #8c8c8c;background:#4a4a4a"></div><svg class="ic" style="left:701px;top:179px" width="9" height="5" viewBox="0 0 9 5"><path d="M0 0h9L4.5 5z" fill="#b8b8b8"/></svg><div class="ab" style="left:716px;top:169px;width:99px;height:25px;border:1px solid #8c8c8c;background:#4a4a4a"></div><div class="ab" style="left:719px;top:172px;width:77px;height:18px;background:#7a7a7a"></div><svg class="ic" style="left:801px;top:179px" width="9" height="5" viewBox="0 0 9 5"><path d="M0 0h9L4.5 5z" fill="#b8b8b8"/></svg><div class="ab" style="left:816px;top:169px;width:117px;height:25px;border:1px solid #8c8c8c;background:#4a4a4a"></div><svg class="ic" style="left:919px;top:179px" width="9" height="5" viewBox="0 0 9 5"><path d="M0 0h9L4.5 5z" fill="#b8b8b8"/></svg><div class="ab" style="left:934px;top:169px;width:99px;height:25px;border:1px solid #8c8c8c;background:#4a4a4a"></div><svg class="ic" style="left:1019px;top:179px" width="9" height="5" viewBox="0 0 9 5"><path d="M0 0h9L4.5 5z" fill="#b8b8b8"/></svg><div class="ab" style="left:1040px;top:169px;width:99px;height:25px;border:1px solid #8c8c8c;background:#4a4a4a"></div><svg class="ic" style="left:1125px;top:179px" width="9" height="5" viewBox="0 0 9 5"><path d="M0 0h9L4.5 5z" fill="#b8b8b8"/></svg><div class="ab" style="left:1140px;top:169px;width:99px;height:25px;border:1px solid #8c8c8c;background:#4a4a4a"></div><div class="ab" style="left:1143px;top:172px;width:77px;height:18px;background:#7a7a7a"></div><svg class="ic" style="left:1225px;top:179px" width="9" height="5" viewBox="0 0 9 5"><path d="M0 0h9L4.5 5z" fill="#b8b8b8"/></svg><div class="ab" style="left:1036px;top:168px;width:1px;height:26px;background:#333;border-right:1px solid #666"></div><div class="ab" style="left:1267px;top:166px;width:1px;height:30px;background:#333"></div><div class="ab" style="left:1274px;top:172px;width:2px;height:2px;background:#888"></div><div class="ab" style="left:1274px;top:176px;width:2px;height:2px;background:#888"></div><div class="ab" style="left:1274px;top:180px;width:2px;height:2px;background:#888"></div><div class="ab" style="left:1274px;top:184px;width:2px;height:2px;background:#888"></div><div class="ab" style="left:1274px;top:188px;width:2px;height:2px;background:#888"></div><div class="ab" style="left:1279px;top:170px;width:383px;height:23px;border:1px solid #8c8c8c;background:#2a2a2a"></div><svg class="ic" style="left:1664px;top:178px" width="9" height="5" viewBox="0 0 9 5"><path d="M0 0h9L4.5 5z" fill="#eee"/></svg><div class="ab" style="left:0px;top:198px;width:1680px;height:16px;background:#575757;border-top:1px solid #7c7c7c;border-bottom:1px solid #a0a0a0"></div><div class="ab" style="left:1px;top:200px;width:14px;height:13px;background:#c9c9bb"></div><svg class="ic" style="left:2px;top:201px" width="13" height="13" viewBox="0 0 13 13"><path d="M5 12V1M2 4l3-3 3 3M8 4h2M0 12h13M11 10l2 2" stroke="#111" stroke-width="1.3" fill="none"/></svg><svg class="ic" style="left:0px;top:0px" width="1680" height="230" viewBox="0 0 1680 230"><g fill="#f2f2f2"><rect x="22.0" y="210.5" width="1" height="2.5"/><rect x="30.0" y="210.5" width="1" height="2.5"/><rect x="38.0" y="208" width="1" height="5"/><rect x="45.0" y="210.5" width="1" height="2.5"/><rect x="53.0" y="210.5" width="1" height="2.5"/><rect x="61.0" y="210.5" width="1" height="2.5"/><rect x="69.0" y="210.5" width="1" height="2.5"/><rect x="76.0" y="201" width="1" height="12"/><rect x="84.0" y="210.5" width="1" height="2.5"/><rect x="92.0" y="210.5" width="1" height="2.5"/><rect x="100.0" y="210.5" width="1" height="2.5"/><rect x="108.0" y="210.5" width="1" height="2.5"/><rect x="115.0" y="208" width="1" height="5"/><rect x="123.0" y="210.5" width="1" height="2.5"/><rect x="131.0" y="210.5" width="1" height="2.5"/><rect x="139.0" y="210.5" width="1" height="2.5"/><rect x="146.0" y="210.5" width="1" height="2.5"/><rect x="154.0" y="201" width="1" height="12"/><rect x="162.0" y="210.5" width="1" height="2.5"/><rect x="170.0" y="210.5" width="1" height="2.5"/><rect x="177.0" y="210.5" width="1" height="2.5"/><rect x="185.0" y="210.5" width="1" height="2.5"/><rect x="193.0" y="208" width="1" height="5"/><rect x="201.0" y="210.5" width="1" height="2.5"/><rect x="209.0" y="210.5" width="1" height="2.5"/><rect x="216.0" y="210.5" width="1" height="2.5"/><rect x="224.0" y="210.5" width="1" height="2.5"/><rect x="232.0" y="201" width="1" height="12"/><rect x="240.0" y="210.5" width="1" height="2.5"/><rect x="247.0" y="210.5" width="1" height="2.5"/><rect x="255.0" y="210.5" width="1" height="2.5"/><rect x="263.0" y="210.5" width="1" height="2.5"/><rect x="271.0" y="208" width="1" height="5"/><rect x="278.0" y="210.5" width="1" height="2.5"/><rect x="286.0" y="210.5" width="1" height="2.5"/><rect x="294.0" y="210.5" width="1" height="2.5"/><rect x="302.0" y="210.5" width="1" height="2.5"/><rect x="309.0" y="201" width="1" height="12"/><rect x="317.0" y="210.5" width="1" height="2.5"/><rect x="325.0" y="210.5" width="1" height="2.5"/><rect x="333.0" y="210.5" width="1" height="2.5"/><rect x="341.0" y="210.5" width="1" height="2.5"/><rect x="348.0" y="208" width="1" height="5"/><rect x="356.0" y="210.5" width="1" height="2.5"/><rect x="364.0" y="210.5" width="1" height="2.5"/><rect x="372.0" y="210.5" width="1" height="2.5"/><rect x="379.0" y="210.5" width="1" height="2.5"/><rect x="387.0" y="201" width="1" height="12"/><rect x="395.0" y="210.5" width="1" height="2.5"/><rect x="403.0" y="210.5" width="1" height="2.5"/><rect x="410.0" y="210.5" width="1" height="2.5"/><rect x="418.0" y="210.5" width="1" height="2.5"/><rect x="426.0" y="208" width="1" height="5"/><rect x="434.0" y="210.5" width="1" height="2.5"/><rect x="441.0" y="210.5" width="1" height="2.5"/><rect x="449.0" y="210.5" width="1" height="2.5"/><rect x="457.0" y="210.5" width="1" height="2.5"/><rect x="465.0" y="201" width="1" height="12"/><rect x="473.0" y="210.5" width="1" height="2.5"/><rect x="480.0" y="210.5" width="1" height="2.5"/><rect x="488.0" y="210.5" width="1" height="2.5"/><rect x="496.0" y="210.5" width="1" height="2.5"/><rect x="504.0" y="208" width="1" height="5"/><rect x="511.0" y="210.5" width="1" height="2.5"/><rect x="519.0" y="210.5" width="1" height="2.5"/><rect x="527.0" y="210.5" width="1" height="2.5"/><rect x="535.0" y="210.5" width="1" height="2.5"/><rect x="542.0" y="201" width="1" height="12"/><rect x="550.0" y="210.5" width="1" height="2.5"/><rect x="558.0" y="210.5" width="1" height="2.5"/><rect x="566.0" y="210.5" width="1" height="2.5"/><rect x="573.0" y="210.5" width="1" height="2.5"/><rect x="581.0" y="208" width="1" height="5"/><rect x="589.0" y="210.5" width="1" height="2.5"/><rect x="597.0" y="210.5" width="1" height="2.5"/><rect x="605.0" y="210.5" width="1" height="2.5"/><rect x="612.0" y="210.5" width="1" height="2.5"/><rect x="620.0" y="201" width="1" height="12"/><rect x="628.0" y="210.5" width="1" height="2.5"/><rect x="636.0" y="210.5" width="1" height="2.5"/><rect x="643.0" y="210.5" width="1" height="2.5"/><rect x="651.0" y="210.5" width="1" height="2.5"/><rect x="659.0" y="208" width="1" height="5"/><rect x="667.0" y="210.5" width="1" height="2.5"/><rect x="674.0" y="210.5" width="1" height="2.5"/><rect x="682.0" y="210.5" width="1" height="2.5"/><rect x="690.0" y="210.5" width="1" height="2.5"/><rect x="698.0" y="201" width="1" height="12"/><rect x="705.0" y="210.5" width="1" height="2.5"/><rect x="713.0" y="210.5" width="1" height="2.5"/><rect x="721.0" y="210.5" width="1" height="2.5"/><rect x="729.0" y="210.5" width="1" height="2.5"/><rect x="737.0" y="208" width="1" height="5"/><rect x="744.0" y="210.5" width="1" height="2.5"/><rect x="752.0" y="210.5" width="1" height="2.5"/><rect x="760.0" y="210.5" width="1" height="2.5"/><rect x="768.0" y="210.5" width="1" height="2.5"/><rect x="775.0" y="201" width="1" height="12"/><rect x="783.0" y="210.5" width="1" height="2.5"/><rect x="791.0" y="210.5" width="1" height="2.5"/><rect x="799.0" y="210.5" width="1" height="2.5"/><rect x="806.0" y="210.5" width="1" height="2.5"/><rect x="814.0" y="208" width="1" height="5"/><rect x="822.0" y="210.5" width="1" height="2.5"/><rect x="830.0" y="210.5" width="1" height="2.5"/><rect x="837.0" y="210.5" width="1" height="2.5"/><rect x="845.0" y="210.5" width="1" height="2.5"/><rect x="853.0" y="201" width="1" height="12"/><rect x="861.0" y="210.5" width="1" height="2.5"/><rect x="869.0" y="210.5" width="1" height="2.5"/><rect x="876.0" y="210.5" width="1" height="2.5"/><rect x="884.0" y="210.5" width="1" height="2.5"/><rect x="892.0" y="208" width="1" height="5"/><rect x="900.0" y="210.5" width="1" height="2.5"/><rect x="907.0" y="210.5" width="1" height="2.5"/><rect x="915.0" y="210.5" width="1" height="2.5"/><rect x="923.0" y="210.5" width="1" height="2.5"/><rect x="931.0" y="201" width="1" height="12"/><rect x="938.0" y="210.5" width="1" height="2.5"/><rect x="946.0" y="210.5" width="1" height="2.5"/><rect x="954.0" y="210.5" width="1" height="2.5"/><rect x="962.0" y="210.5" width="1" height="2.5"/><rect x="969.0" y="208" width="1" height="5"/><rect x="977.0" y="210.5" width="1" height="2.5"/><rect x="985.0" y="210.5" width="1" height="2.5"/><rect x="993.0" y="210.5" width="1" height="2.5"/><rect x="1001.0" y="210.5" width="1" height="2.5"/><rect x="1008.0" y="201" width="1" height="12"/><rect x="1016.0" y="210.5" width="1" height="2.5"/><rect x="1024.0" y="210.5" width="1" height="2.5"/><rect x="1032.0" y="210.5" width="1" height="2.5"/><rect x="1039.0" y="210.5" width="1" height="2.5"/><rect x="1047.0" y="208" width="1" height="5"/><rect x="1055.0" y="210.5" width="1" height="2.5"/><rect x="1063.0" y="210.5" width="1" height="2.5"/><rect x="1070.0" y="210.5" width="1" height="2.5"/><rect x="1078.0" y="210.5" width="1" height="2.5"/><rect x="1086.0" y="201" width="1" height="12"/><rect x="1094.0" y="210.5" width="1" height="2.5"/><rect x="1101.0" y="210.5" width="1" height="2.5"/><rect x="1109.0" y="210.5" width="1" height="2.5"/><rect x="1117.0" y="210.5" width="1" height="2.5"/><rect x="1125.0" y="208" width="1" height="5"/><rect x="1133.0" y="210.5" width="1" height="2.5"/><rect x="1140.0" y="210.5" width="1" height="2.5"/><rect x="1148.0" y="210.5" width="1" height="2.5"/><rect x="1156.0" y="210.5" width="1" height="2.5"/><rect x="1164.0" y="201" width="1" height="12"/><rect x="1171.0" y="210.5" width="1" height="2.5"/><rect x="1179.0" y="210.5" width="1" height="2.5"/><rect x="1187.0" y="210.5" width="1" height="2.5"/><rect x="1195.0" y="210.5" width="1" height="2.5"/><rect x="1202.0" y="208" width="1" height="5"/><rect x="1210.0" y="210.5" width="1" height="2.5"/><rect x="1218.0" y="210.5" width="1" height="2.5"/><rect x="1226.0" y="210.5" width="1" height="2.5"/><rect x="1233.0" y="210.5" width="1" height="2.5"/><rect x="1241.0" y="201" width="1" height="12"/><rect x="1249.0" y="210.5" width="1" height="2.5"/><rect x="1257.0" y="210.5" width="1" height="2.5"/><rect x="1265.0" y="210.5" width="1" height="2.5"/><rect x="1272.0" y="210.5" width="1" height="2.5"/><rect x="1280.0" y="208" width="1" height="5"/><rect x="1288.0" y="210.5" width="1" height="2.5"/><rect x="1296.0" y="210.5" width="1" height="2.5"/><rect x="1303.0" y="210.5" width="1" height="2.5"/><rect x="1311.0" y="210.5" width="1" height="2.5"/><rect x="1319.0" y="201" width="1" height="12"/><rect x="1327.0" y="210.5" width="1" height="2.5"/><rect x="1334.0" y="210.5" width="1" height="2.5"/><rect x="1342.0" y="210.5" width="1" height="2.5"/><rect x="1350.0" y="210.5" width="1" height="2.5"/><rect x="1358.0" y="208" width="1" height="5"/><rect x="1365.0" y="210.5" width="1" height="2.5"/><rect x="1373.0" y="210.5" width="1" height="2.5"/><rect x="1381.0" y="210.5" width="1" height="2.5"/><rect x="1389.0" y="210.5" width="1" height="2.5"/><rect x="1397.0" y="201" width="1" height="12"/><rect x="1404.0" y="210.5" width="1" height="2.5"/><rect x="1412.0" y="210.5" width="1" height="2.5"/><rect x="1420.0" y="210.5" width="1" height="2.5"/><rect x="1428.0" y="210.5" width="1" height="2.5"/><rect x="1435.0" y="208" width="1" height="5"/><rect x="1443.0" y="210.5" width="1" height="2.5"/><rect x="1451.0" y="210.5" width="1" height="2.5"/><rect x="1459.0" y="210.5" width="1" height="2.5"/><rect x="1466.0" y="210.5" width="1" height="2.5"/><rect x="1474.0" y="201" width="1" height="12"/><rect x="1482.0" y="210.5" width="1" height="2.5"/><rect x="1490.0" y="210.5" width="1" height="2.5"/><rect x="1497.0" y="210.5" width="1" height="2.5"/><rect x="1505.0" y="210.5" width="1" height="2.5"/><rect x="1513.0" y="208" width="1" height="5"/><rect x="1521.0" y="210.5" width="1" height="2.5"/><rect x="1529.0" y="210.5" width="1" height="2.5"/><rect x="1536.0" y="210.5" width="1" height="2.5"/><rect x="1544.0" y="210.5" width="1" height="2.5"/><rect x="1552.0" y="201" width="1" height="12"/><rect x="1560.0" y="210.5" width="1" height="2.5"/><rect x="1567.0" y="210.5" width="1" height="2.5"/><rect x="1575.0" y="210.5" width="1" height="2.5"/><rect x="1583.0" y="210.5" width="1" height="2.5"/><rect x="1591.0" y="208" width="1" height="5"/><rect x="1598.0" y="210.5" width="1" height="2.5"/><rect x="1606.0" y="210.5" width="1" height="2.5"/><rect x="1614.0" y="210.5" width="1" height="2.5"/><rect x="1622.0" y="210.5" width="1" height="2.5"/><rect x="1630.0" y="201" width="1" height="12"/><rect x="1637.0" y="210.5" width="1" height="2.5"/><rect x="1645.0" y="210.5" width="1" height="2.5"/><rect x="1653.0" y="210.5" width="1" height="2.5"/><rect x="1661.0" y="210.5" width="1" height="2.5"/></g></svg><div class="t" style="left:78px;top:200.5px;font-size:8.5px;color:#d8d8d8;line-height:12px">0 in</div><div class="t" style="left:156px;top:200.5px;font-size:8.5px;color:#d8d8d8;line-height:12px">1 in</div><div class="t" style="left:234px;top:200.5px;font-size:8.5px;color:#d8d8d8;line-height:12px">2 in</div><div class="t" style="left:311px;top:200.5px;font-size:8.5px;color:#d8d8d8;line-height:12px">3 in</div><div class="t" style="left:389px;top:200.5px;font-size:8.5px;color:#d8d8d8;line-height:12px">4 in</div><div class="t" style="left:467px;top:200.5px;font-size:8.5px;color:#d8d8d8;line-height:12px">5 in</div><div class="t" style="left:544px;top:200.5px;font-size:8.5px;color:#d8d8d8;line-height:12px">6 in</div><div class="t" style="left:622px;top:200.5px;font-size:8.5px;color:#d8d8d8;line-height:12px">7 in</div><div class="t" style="left:700px;top:200.5px;font-size:8.5px;color:#d8d8d8;line-height:12px">8 in</div><div class="t" style="left:777px;top:200.5px;font-size:8.5px;color:#d8d8d8;line-height:12px">9 in</div><div class="t" style="left:855px;top:200.5px;font-size:8.5px;color:#d8d8d8;line-height:12px">10 in</div><div class="t" style="left:933px;top:200.5px;font-size:8.5px;color:#d8d8d8;line-height:12px">11 in</div><div class="t" style="left:1010px;top:200.5px;font-size:8.5px;color:#d8d8d8;line-height:12px">12 in</div><div class="t" style="left:1088px;top:200.5px;font-size:8.5px;color:#d8d8d8;line-height:12px">13 in</div><div class="t" style="left:1166px;top:200.5px;font-size:8.5px;color:#d8d8d8;line-height:12px">14 in</div><div class="t" style="left:1243px;top:200.5px;font-size:8.5px;color:#d8d8d8;line-height:12px">15 in</div><div class="t" style="left:1321px;top:200.5px;font-size:8.5px;color:#d8d8d8;line-height:12px">16 in</div><div class="t" style="left:1399px;top:200.5px;font-size:8.5px;color:#d8d8d8;line-height:12px">17 in</div><div class="t" style="left:1476px;top:200.5px;font-size:8.5px;color:#d8d8d8;line-height:12px">18 in</div><div class="t" style="left:1554px;top:200.5px;font-size:8.5px;color:#d8d8d8;line-height:12px">19 in</div><div class="t" style="left:1632px;top:200.5px;font-size:8.5px;color:#d8d8d8;line-height:12px">20 in</div><div class="ab" style="left:656px;top:198px;width:1px;height:15px;background:#3c3"></div><div class="ab" style="left:0px;top:214px;width:16px;height:704px;background:#575757;border-right:1px solid #8a8a8a"></div><div class="ab" style="left:1px;top:214px;width:1px;height:704px;background:#777"></div><svg class="ic" style="left:0px;top:0px" width="20" height="986" viewBox="0 0 20 986"><g fill="#f2f2f2"><rect x="12" y="230.0" width="3" height="1"/><rect x="12" y="237.0" width="3" height="1"/><rect x="12" y="245.0" width="3" height="1"/><rect x="12" y="253.0" width="3" height="1"/><rect x="9" y="261.0" width="6" height="1"/><rect x="12" y="268.0" width="3" height="1"/><rect x="12" y="276.0" width="3" height="1"/><rect x="12" y="284.0" width="3" height="1"/><rect x="12" y="292.0" width="3" height="1"/><rect x="3" y="300.0" width="12" height="1"/><rect x="12" y="307.0" width="3" height="1"/><rect x="12" y="315.0" width="3" height="1"/><rect x="12" y="323.0" width="3" height="1"/><rect x="12" y="331.0" width="3" height="1"/><rect x="9" y="338.0" width="6" height="1"/><rect x="12" y="346.0" width="3" height="1"/><rect x="12" y="354.0" width="3" height="1"/><rect x="12" y="362.0" width="3" height="1"/><rect x="12" y="369.0" width="3" height="1"/><rect x="3" y="377.0" width="12" height="1"/><rect x="12" y="385.0" width="3" height="1"/><rect x="12" y="393.0" width="3" height="1"/><rect x="12" y="400.0" width="3" height="1"/><rect x="12" y="408.0" width="3" height="1"/><rect x="9" y="416.0" width="6" height="1"/><rect x="12" y="424.0" width="3" height="1"/><rect x="12" y="432.0" width="3" height="1"/><rect x="12" y="439.0" width="3" height="1"/><rect x="12" y="447.0" width="3" height="1"/><rect x="3" y="455.0" width="12" height="1"/><rect x="12" y="463.0" width="3" height="1"/><rect x="12" y="470.0" width="3" height="1"/><rect x="12" y="478.0" width="3" height="1"/><rect x="12" y="486.0" width="3" height="1"/><rect x="9" y="494.0" width="6" height="1"/><rect x="12" y="501.0" width="3" height="1"/><rect x="12" y="509.0" width="3" height="1"/><rect x="12" y="517.0" width="3" height="1"/><rect x="12" y="525.0" width="3" height="1"/><rect x="3" y="532.0" width="12" height="1"/><rect x="12" y="540.0" width="3" height="1"/><rect x="12" y="548.0" width="3" height="1"/><rect x="12" y="556.0" width="3" height="1"/><rect x="12" y="564.0" width="3" height="1"/><rect x="9" y="571.0" width="6" height="1"/><rect x="12" y="579.0" width="3" height="1"/><rect x="12" y="587.0" width="3" height="1"/><rect x="12" y="595.0" width="3" height="1"/><rect x="12" y="602.0" width="3" height="1"/><rect x="3" y="610.0" width="12" height="1"/><rect x="12" y="618.0" width="3" height="1"/><rect x="12" y="626.0" width="3" height="1"/><rect x="12" y="633.0" width="3" height="1"/><rect x="12" y="641.0" width="3" height="1"/><rect x="9" y="649.0" width="6" height="1"/><rect x="12" y="657.0" width="3" height="1"/><rect x="12" y="664.0" width="3" height="1"/><rect x="12" y="672.0" width="3" height="1"/><rect x="12" y="680.0" width="3" height="1"/><rect x="3" y="688.0" width="12" height="1"/><rect x="12" y="696.0" width="3" height="1"/><rect x="12" y="703.0" width="3" height="1"/><rect x="12" y="711.0" width="3" height="1"/><rect x="12" y="719.0" width="3" height="1"/><rect x="9" y="727.0" width="6" height="1"/><rect x="12" y="734.0" width="3" height="1"/><rect x="12" y="742.0" width="3" height="1"/><rect x="12" y="750.0" width="3" height="1"/><rect x="12" y="758.0" width="3" height="1"/><rect x="3" y="765.0" width="12" height="1"/><rect x="12" y="773.0" width="3" height="1"/><rect x="12" y="781.0" width="3" height="1"/><rect x="12" y="789.0" width="3" height="1"/><rect x="12" y="796.0" width="3" height="1"/><rect x="9" y="804.0" width="6" height="1"/><rect x="12" y="812.0" width="3" height="1"/><rect x="12" y="820.0" width="3" height="1"/><rect x="12" y="828.0" width="3" height="1"/><rect x="12" y="835.0" width="3" height="1"/><rect x="3" y="843.0" width="12" height="1"/><rect x="12" y="851.0" width="3" height="1"/><rect x="12" y="859.0" width="3" height="1"/><rect x="12" y="866.0" width="3" height="1"/><rect x="12" y="874.0" width="3" height="1"/><rect x="9" y="882.0" width="6" height="1"/><rect x="12" y="890.0" width="3" height="1"/><rect x="12" y="897.0" width="3" height="1"/><rect x="12" y="905.0" width="3" height="1"/><rect x="12" y="913.0" width="3" height="1"/></g></svg><div class="t" style="left:-7px;top:276px;width:30px;font-size:8.5px;color:#d8d8d8;line-height:12px;transform:rotate(-90deg);transform-origin:15px 6px;text-align:left">11 in</div><div class="t" style="left:-7px;top:353px;width:30px;font-size:8.5px;color:#d8d8d8;line-height:12px;transform:rotate(-90deg);transform-origin:15px 6px;text-align:left">10 in</div><div class="t" style="left:-7px;top:431px;width:30px;font-size:8.5px;color:#d8d8d8;line-height:12px;transform:rotate(-90deg);transform-origin:15px 6px;text-align:left">9 in</div><div class="t" style="left:-7px;top:508px;width:30px;font-size:8.5px;color:#d8d8d8;line-height:12px;transform:rotate(-90deg);transform-origin:15px 6px;text-align:left">8 in</div><div class="t" style="left:-7px;top:586px;width:30px;font-size:8.5px;color:#d8d8d8;line-height:12px;transform:rotate(-90deg);transform-origin:15px 6px;text-align:left">7 in</div><div class="t" style="left:-7px;top:664px;width:30px;font-size:8.5px;color:#d8d8d8;line-height:12px;transform:rotate(-90deg);transform-origin:15px 6px;text-align:left">6 in</div><div class="t" style="left:-7px;top:741px;width:30px;font-size:8.5px;color:#d8d8d8;line-height:12px;transform:rotate(-90deg);transform-origin:15px 6px;text-align:left">5 in</div><div class="t" style="left:-7px;top:819px;width:30px;font-size:8.5px;color:#d8d8d8;line-height:12px;transform:rotate(-90deg);transform-origin:15px 6px;text-align:left">4 in</div><div class="t" style="left:-7px;top:897px;width:30px;font-size:8.5px;color:#d8d8d8;line-height:12px;transform:rotate(-90deg);transform-origin:15px 6px;text-align:left">3 in</div><div class="ab" style="left:0px;top:371px;width:16px;height:1px;background:#3c3"></div><div class="ab" style="left:16px;top:214px;width:1646px;height:687px;background:#fff"></div><svg class="drw" width="1680" height="986" viewBox="0 0 1680 986"><defs><clipPath id="cv"><rect x="16" y="214" width="1646" height="687"/></clipPath></defs><g clip-path="url(#cv)"><rect x="368" y="312" width="939" height="550" fill="#000"/><rect x="375" y="319" width="925" height="536" fill="#c8dfc7"/><g fill="#000"><rect x="427.0" y="384.0" width="136.5" height="64.0"/><rect x="598.0" y="384.0" width="137.0" height="64.0"/><rect x="769.0" y="384.0" width="136.5" height="64.0"/><rect x="940.0" y="384.0" width="137.0" height="64.0"/><rect x="1111.0" y="384.0" width="137.0" height="64.0"/><circle cx="495.8" cy="359.6" r="13.4"/><circle cx="668.2" cy="359.6" r="13.4"/><circle cx="1008.5" cy="359.6" r="13.4"/><circle cx="668.3" cy="503.4" r="9.4"/><circle cx="779.5" cy="509.2" r="13.5"/><circle cx="1186.7" cy="509.2" r="13.5"/><circle cx="779.5" cy="664.8" r="13.5"/><circle cx="779.5" cy="586.8" r="44.0"/><circle cx="915.0" cy="586.8" r="44.0"/><circle cx="1051.2" cy="586.8" r="44.0"/><circle cx="1186.7" cy="586.8" r="44.0"/><circle cx="488.3" cy="586.6" r="17.2"/><circle cx="460.0" cy="558.7" r="3.0"/><circle cx="460.0" cy="614.5" r="3.0"/><circle cx="515.8" cy="558.7" r="3.0"/><circle cx="515.8" cy="614.5" r="3.0"/><rect x="616.0" y="598.0" width="55.0" height="37.0"/><circle cx="488.5" cy="771.2" r="17.0"/><circle cx="565.4" cy="771.2" r="17.0"/><circle cx="643.2" cy="771.2" r="17.0"/><circle cx="759.6" cy="771.1" r="9.4"/><circle cx="895.5" cy="771.1" r="9.4"/><circle cx="934.5" cy="771.1" r="9.4"/><circle cx="973.5" cy="771.1" r="9.4"/><circle cx="1031.3" cy="771.1" r="9.4"/><circle cx="1089.8" cy="771.1" r="9.4"/><circle cx="1186.6" cy="771.1" r="14.5"/></g><g stroke="#236d90" stroke-width="1.1" fill="none"><line x1="371.5" y1="222.0" x2="371.5" y2="487.0"/><line x1="371.5" y1="502.0" x2="371.5" y2="855.0"/><line x1="769.5" y1="222.0" x2="769.5" y2="380.0"/><line x1="906.5" y1="222.0" x2="906.5" y2="380.0"/><line x1="1303.5" y1="222.0" x2="1303.5" y2="312.0"/><line x1="371.5" y1="236.5" x2="545.0" y2="236.5"/><line x1="596.0" y1="236.5" x2="769.3" y2="236.5"/><line x1="906.0" y1="236.5" x2="1078.0" y2="236.5"/><line x1="1130.0" y1="236.5" x2="1303.5" y2="236.5"/><line x1="598.5" y1="255.0" x2="598.5" y2="380.0"/><line x1="1076.5" y1="255.0" x2="1076.5" y2="380.0"/><line x1="371.5" y1="269.5" x2="463.0" y2="269.5"/><line x1="507.0" y1="269.5" x2="598.4" y2="269.5"/><line x1="1076.6" y1="269.5" x2="1168.0" y2="269.5"/><line x1="1212.0" y1="269.5" x2="1303.5" y2="269.5"/><line x1="343.0" y1="294.5" x2="371.5" y2="294.5"/><line x1="427.2" y1="294.5" x2="455.0" y2="294.5"/><line x1="1219.0" y1="294.5" x2="1247.5" y2="294.5"/><line x1="1303.5" y1="294.5" x2="1332.0" y2="294.5"/><line x1="427.5" y1="280.0" x2="427.5" y2="380.0"/><line x1="563.5" y1="280.0" x2="563.5" y2="380.0"/><line x1="734.5" y1="280.0" x2="734.5" y2="380.0"/><line x1="1247.5" y1="280.0" x2="1247.5" y2="380.0"/><line x1="427.2" y1="294.5" x2="477.0" y2="294.5"/><line x1="514.0" y1="294.5" x2="563.4" y2="294.5"/><line x1="598.4" y1="294.5" x2="648.0" y2="294.5"/><line x1="685.0" y1="294.5" x2="734.4" y2="294.5"/><line x1="769.3" y1="294.5" x2="819.0" y2="294.5"/><line x1="856.0" y1="294.5" x2="906.0" y2="294.5"/><line x1="495.5" y1="318.0" x2="495.5" y2="354.0"/><line x1="427.2" y1="331.5" x2="440.0" y2="331.5"/><line x1="482.0" y1="331.5" x2="495.8" y2="331.5"/><line x1="940.5" y1="320.0" x2="940.5" y2="380.0"/><line x1="1008.5" y1="320.0" x2="1008.5" y2="354.0"/><line x1="940.4" y1="334.5" x2="953.0" y2="334.5"/><line x1="995.0" y1="334.5" x2="1008.5" y2="334.5"/><line x1="1111.5" y1="318.0" x2="1111.5" y2="380.0"/><line x1="563.4" y1="351.5" x2="607.0" y2="351.5"/><line x1="734.4" y1="355.5" x2="777.0" y2="355.5"/><line x1="1076.6" y1="332.5" x2="1119.0" y2="332.5"/><line x1="1111.4" y1="355.5" x2="1160.0" y2="355.5"/><line x1="1198.0" y1="355.5" x2="1247.5" y2="355.5"/><polyline points="504.4,348.5 520.6,326.3 535.0,326.3" fill="none"/><polyline points="676.0,348.0 694.0,328.0 710.0,328.0" fill="none"/><polyline points="995.3,363.5 971.3,368.0 954.3,368.0" fill="none"/><line x1="244.0" y1="315.5" x2="368.0" y2="315.5"/><line x1="330.0" y1="384.5" x2="422.0" y2="384.5"/><line x1="330.0" y1="447.5" x2="422.0" y2="447.5"/><line x1="344.5" y1="315.5" x2="344.5" y2="338.0"/><line x1="344.5" y1="359.0" x2="344.5" y2="384.5"/><line x1="344.5" y1="384.5" x2="344.5" y2="404.0"/><line x1="344.5" y1="426.0" x2="344.5" y2="447.5"/><line x1="288.0" y1="549.5" x2="445.0" y2="549.5"/><line x1="302.5" y1="315.5" x2="302.5" y2="420.0"/><line x1="302.5" y1="442.0" x2="302.5" y2="549.3"/><line x1="258.5" y1="315.5" x2="258.5" y2="438.0"/><line x1="258.5" y1="460.0" x2="258.5" y2="586.6"/><line x1="244.0" y1="586.5" x2="1435.0" y2="586.5"/><line x1="1268.0" y1="315.5" x2="1435.0" y2="315.5"/><line x1="1187.0" y1="509.5" x2="1395.0" y2="509.5"/><line x1="784.0" y1="509.5" x2="1187.0" y2="509.5"/><line x1="1380.5" y1="315.5" x2="1380.5" y2="400.0"/><line x1="1380.5" y1="422.0" x2="1380.5" y2="509.2"/><line x1="1420.5" y1="315.5" x2="1420.5" y2="439.0"/><line x1="1420.5" y1="461.0" x2="1420.5" y2="586.6"/><line x1="668.5" y1="460.0" x2="668.5" y2="503.0"/><line x1="371.5" y1="473.5" x2="500.0" y2="473.5"/><line x1="547.0" y1="473.5" x2="668.3" y2="473.5"/><polyline points="676.0,496.5 698.7,475.2 713.0,475.2" fill="none"/><line x1="673.0" y1="503.5" x2="717.0" y2="503.5"/><line x1="702.5" y1="503.4" x2="702.5" y2="527.0"/><line x1="702.5" y1="549.0" x2="702.5" y2="586.6"/><line x1="779.5" y1="454.0" x2="779.5" y2="509.0"/><line x1="779.5" y1="468.5" x2="1019.7" y2="468.5"/><line x1="1063.5" y1="468.5" x2="1303.5" y2="468.5"/><line x1="1303.5" y1="460.0" x2="1303.5" y2="504.0"/><line x1="1303.5" y1="591.0" x2="1303.5" y2="855.0"/><line x1="1186.5" y1="477.0" x2="1186.5" y2="509.0"/><line x1="1186.7" y1="491.5" x2="1232.0" y2="491.5"/><line x1="1258.0" y1="491.5" x2="1303.5" y2="491.5"/><polyline points="789.6,519.0 811.5,535.4 825.0,535.4" fill="none"/><polyline points="1177.0,519.8 1153.0,539.0 1138.8,539.0" fill="none"/><polyline points="1210.0,549.0 1223.6,526.0 1238.7,526.0" fill="none"/><rect x="450.4" y="549.3" width="75.2" height="75.4" fill="none" stroke="#000" stroke-width="1.2"/><line x1="488.5" y1="503.0" x2="488.5" y2="586.0"/><line x1="371.5" y1="517.5" x2="416.0" y2="517.5"/><line x1="443.0" y1="517.5" x2="488.3" y2="517.5"/><polyline points="434.3,529.5 448.0,529.5 458.6,555.5" fill="none"/><polyline points="530.0,493.0 515.0,493.0 493.0,570.0" fill="none"/><line x1="520.0" y1="558.5" x2="568.0" y2="558.5"/><line x1="520.0" y1="614.5" x2="568.0" y2="614.5"/><line x1="553.5" y1="558.7" x2="553.5" y2="586.0"/><line x1="553.5" y1="586.0" x2="553.5" y2="614.5"/><polyline points="553.8,558.7 553.8,519.5 547.0,519.5" fill="none"/><line x1="460.5" y1="627.0" x2="460.5" y2="659.0"/><line x1="515.5" y1="627.0" x2="515.5" y2="659.0"/><line x1="433.0" y1="645.5" x2="460.0" y2="645.5"/><line x1="515.8" y1="645.5" x2="543.0" y2="645.5"/><line x1="583.0" y1="598.5" x2="611.0" y2="598.5"/><line x1="675.0" y1="598.5" x2="713.0" y2="598.5"/><line x1="675.0" y1="635.5" x2="713.0" y2="635.5"/><polyline points="597.5,586.6 597.5,557.5 602.0,557.5" fill="none"/><line x1="597.5" y1="598.0" x2="597.5" y2="626.0"/><line x1="698.5" y1="598.0" x2="698.5" y2="647.6"/><line x1="698.7" y1="647.5" x2="705.0" y2="647.5"/><line x1="616.5" y1="639.0" x2="616.5" y2="672.0"/><line x1="671.5" y1="639.0" x2="671.5" y2="672.0"/><line x1="589.0" y1="658.5" x2="616.0" y2="658.5"/><line x1="671.0" y1="658.5" x2="698.7" y2="658.5"/><line x1="779.5" y1="591.0" x2="779.5" y2="678.6"/><line x1="915.5" y1="591.0" x2="915.5" y2="678.6"/><line x1="1051.5" y1="591.0" x2="1051.5" y2="678.6"/><line x1="1186.5" y1="591.0" x2="1186.5" y2="678.6"/><line x1="779.5" y1="664.5" x2="828.0" y2="664.5"/><line x1="866.0" y1="664.5" x2="915.0" y2="664.5"/><line x1="915.0" y1="664.5" x2="964.0" y2="664.5"/><line x1="1002.0" y1="664.5" x2="1051.2" y2="664.5"/><line x1="1051.2" y1="664.5" x2="1096.0" y2="664.5"/><line x1="1141.5" y1="664.5" x2="1186.7" y2="664.5"/><line x1="1186.7" y1="664.5" x2="1232.0" y2="664.5"/><line x1="1259.0" y1="664.5" x2="1303.5" y2="664.5"/><polyline points="786.0,678.6 803.3,707.9 817.5,707.9" fill="none"/><line x1="1089.5" y1="678.6" x2="1089.5" y2="771.0"/><line x1="1089.8" y1="693.5" x2="1178.0" y2="693.5"/><line x1="1215.0" y1="693.5" x2="1303.5" y2="693.5"/><polyline points="514.5,701.4 678.2,701.4" fill="none"/><line x1="514.5" y1="701.4" x2="490.7" y2="754.0"/><line x1="592.8" y1="701.4" x2="570.0" y2="754.0"/><line x1="664.0" y1="701.4" x2="647.6" y2="754.0"/><line x1="338.0" y1="771.5" x2="1089.8" y2="771.5"/><line x1="338.0" y1="858.5" x2="368.0" y2="858.5"/><line x1="352.5" y1="771.2" x2="352.5" y2="803.0"/><line x1="352.5" y1="825.0" x2="352.5" y2="858.5"/><line x1="371.5" y1="865.0" x2="371.5" y2="893.0"/><line x1="488.5" y1="776.0" x2="488.5" y2="893.0"/><line x1="565.5" y1="776.0" x2="565.5" y2="893.0"/><line x1="759.5" y1="776.0" x2="759.5" y2="893.0"/><line x1="895.5" y1="776.0" x2="895.5" y2="893.0"/><line x1="371.5" y1="879.5" x2="415.0" y2="879.5"/><line x1="443.0" y1="879.5" x2="488.5" y2="879.5"/><line x1="488.5" y1="879.5" x2="513.0" y2="879.5"/><line x1="540.5" y1="879.5" x2="565.4" y2="879.5"/><line x1="759.6" y1="879.5" x2="808.7" y2="879.5"/><line x1="846.6" y1="879.5" x2="895.5" y2="879.5"/><line x1="895.5" y1="709.0" x2="895.5" y2="776.0"/><line x1="934.5" y1="737.0" x2="934.5" y2="771.0"/><line x1="973.5" y1="709.0" x2="973.5" y2="771.0"/><line x1="1031.5" y1="708.0" x2="1031.5" y2="771.0"/><line x1="895.5" y1="723.5" x2="920.7" y2="723.5"/><line x1="948.0" y1="723.5" x2="973.5" y2="723.5"/><line x1="867.0" y1="751.5" x2="895.5" y2="751.5"/><line x1="934.5" y1="751.5" x2="963.0" y2="751.5"/><line x1="945.0" y1="740.5" x2="973.5" y2="740.5"/><line x1="1031.3" y1="740.5" x2="1060.0" y2="740.5"/><line x1="1003.0" y1="722.5" x2="1031.3" y2="722.5"/><line x1="1089.8" y1="722.5" x2="1118.0" y2="722.5"/><line x1="783.5" y1="835.5" x2="1124.8" y2="835.5"/><line x1="783.5" y1="835.0" x2="764.5" y2="780.0"/><line x1="918.5" y1="835.0" x2="901.0" y2="780.0"/><line x1="955.3" y1="835.0" x2="937.4" y2="780.0"/><line x1="994.3" y1="835.0" x2="976.4" y2="780.0"/><line x1="1055.2" y1="835.0" x2="1037.8" y2="780.4"/><line x1="1110.3" y1="835.0" x2="1092.5" y2="780.4"/><line x1="1186.6" y1="771.5" x2="1232.0" y2="771.5"/><line x1="1258.7" y1="771.5" x2="1303.5" y2="771.5"/><line x1="1173.5" y1="782.0" x2="1173.5" y2="812.7"/><line x1="1200.5" y1="782.0" x2="1200.5" y2="812.7"/><line x1="1145.0" y1="798.5" x2="1173.5" y2="798.5"/><line x1="1200.2" y1="798.5" x2="1222.0" y2="798.5"/><polyline points="1190.6,757.0 1200.2,720.0 1214.5,720.0" fill="none"/></g><g fill="#236d90"><path d="M375.0 235.0h7v-1h4v5h-4v-1h-7z"/><path d="M766.0 235.0h-7v-1h-4v5h4v-1h7z"/><path d="M910.0 235.0h7v-1h4v5h-4v-1h-7z"/><path d="M1300.0 235.0h-7v-1h-4v5h4v-1h7z"/><path d="M375.0 268.0h7v-1h4v5h-4v-1h-7z"/><path d="M595.0 268.0h-7v-1h-4v5h4v-1h7z"/><path d="M1080.0 268.0h7v-1h4v5h-4v-1h-7z"/><path d="M1300.0 268.0h-7v-1h-4v5h4v-1h7z"/><path d="M368.0 293.0h-7v-1h-4v5h4v-1h7z"/><path d="M431.0 293.0h7v-1h4v5h-4v-1h-7z"/><path d="M1244.0 293.0h-7v-1h-4v5h4v-1h7z"/><path d="M1307.0 293.0h7v-1h4v5h-4v-1h-7z"/><path d="M431.0 293.0h7v-1h4v5h-4v-1h-7z"/><path d="M560.0 293.0h-7v-1h-4v5h4v-1h7z"/><path d="M602.0 293.0h7v-1h4v5h-4v-1h-7z"/><path d="M731.0 293.0h-7v-1h-4v5h4v-1h7z"/><path d="M773.0 293.0h7v-1h4v5h-4v-1h-7z"/><path d="M903.0 293.0h-7v-1h-4v5h4v-1h7z"/><path d="M431.0 330.0h7v-1h4v5h-4v-1h-7z"/><path d="M492.0 330.0h-7v-1h-4v5h4v-1h7z"/><path d="M944.0 333.0h7v-1h4v5h-4v-1h-7z"/><path d="M1005.0 333.0h-7v-1h-4v5h4v-1h7z"/><path d="M567.0 350.0h7v-1h4v5h-4v-1h-7z"/><path d="M595.0 350.0h-7v-1h-4v5h4v-1h7z"/><path d="M738.0 354.0h7v-1h4v5h-4v-1h-7z"/><path d="M766.0 354.0h-7v-1h-4v5h4v-1h7z"/><path d="M1080.0 331.0h7v-1h4v5h-4v-1h-7z"/><path d="M1108.0 331.0h-7v-1h-4v5h4v-1h7z"/><path d="M1115.0 354.0h7v-1h4v5h-4v-1h-7z"/><path d="M1244.0 354.0h-7v-1h-4v5h4v-1h7z"/><path d="M504.4 348.5L509.2 337.2L513.7 340.5z"/><path d="M676.0 348.0L681.9 337.2L686.1 341.0z"/><path d="M995.3 363.5L984.0 368.5L983.0 363.0z"/><path d="M343.0 319.0v7h-1v4h5v-4h-1v-7z"/><path d="M343.0 381.0v-7h-1v-4h5v4h-1v7z"/><path d="M343.0 388.0v7h-1v4h5v-4h-1v-7z"/><path d="M343.0 444.0v-7h-1v-4h5v4h-1v7z"/><path d="M301.0 319.0v7h-1v4h5v-4h-1v-7z"/><path d="M301.0 546.0v-7h-1v-4h5v4h-1v7z"/><path d="M257.0 319.0v7h-1v4h5v-4h-1v-7z"/><path d="M257.0 583.0v-7h-1v-4h5v4h-1v7z"/><path d="M1379.0 319.0v7h-1v4h5v-4h-1v-7z"/><path d="M1379.0 506.0v-7h-1v-4h5v4h-1v7z"/><path d="M1419.0 319.0v7h-1v4h5v-4h-1v-7z"/><path d="M1419.0 583.0v-7h-1v-4h5v4h-1v7z"/><path d="M375.0 472.0h7v-1h4v5h-4v-1h-7z"/><path d="M665.0 472.0h-7v-1h-4v5h4v-1h7z"/><path d="M676.0 496.5L682.8 486.2L686.7 490.3z"/><path d="M701.0 507.0v7h-1v4h5v-4h-1v-7z"/><path d="M701.0 583.0v-7h-1v-4h5v4h-1v7z"/><path d="M783.0 467.0h7v-1h4v5h-4v-1h-7z"/><path d="M1300.0 467.0h-7v-1h-4v5h4v-1h7z"/><path d="M1190.0 490.0h7v-1h4v5h-4v-1h-7z"/><path d="M1300.0 490.0h-7v-1h-4v5h4v-1h7z"/><path d="M789.6 519.0L800.9 524.0L797.5 528.4z"/><path d="M1177.0 519.8L1169.4 529.5L1165.9 525.1z"/><path d="M1210.0 549.0L1213.7 537.2L1218.5 540.1z"/><path d="M375.0 516.0h7v-1h4v5h-4v-1h-7z"/><path d="M485.0 516.0h-7v-1h-4v5h4v-1h7z"/><path d="M458.6 555.5L451.5 545.4L456.7 543.3z"/><path d="M493.0 570.0L493.6 557.7L499.0 559.2z"/><path d="M552.0 562.0v7h-1v4h5v-4h-1v-7z"/><path d="M552.0 611.0v-7h-1v-4h5v4h-1v7z"/><path d="M457.0 644.0h-7v-1h-4v5h4v-1h7z"/><path d="M519.0 644.0h7v-1h4v5h-4v-1h-7z"/><path d="M596.0 583.0v-7h-1v-4h5v4h-1v7z"/><path d="M596.0 602.0v7h-1v4h5v-4h-1v-7z"/><path d="M697.0 602.0v7h-1v4h5v-4h-1v-7z"/><path d="M697.0 632.0v-7h-1v-4h5v4h-1v7z"/><path d="M613.0 657.0h-7v-1h-4v5h4v-1h7z"/><path d="M675.0 657.0h7v-1h4v5h-4v-1h-7z"/><path d="M783.0 663.0h7v-1h4v5h-4v-1h-7z"/><path d="M912.0 663.0h-7v-1h-4v5h4v-1h7z"/><path d="M919.0 663.0h7v-1h4v5h-4v-1h-7z"/><path d="M1048.0 663.0h-7v-1h-4v5h4v-1h7z"/><path d="M1055.0 663.0h7v-1h4v5h-4v-1h-7z"/><path d="M1183.0 663.0h-7v-1h-4v5h4v-1h7z"/><path d="M1190.0 663.0h7v-1h4v5h-4v-1h-7z"/><path d="M1300.0 663.0h-7v-1h-4v5h4v-1h7z"/><path d="M786.0 678.6L794.5 687.5L789.7 690.4z"/><path d="M1093.0 692.0h7v-1h4v5h-4v-1h-7z"/><path d="M1300.0 692.0h-7v-1h-4v5h4v-1h7z"/><path d="M490.7 754.0L493.1 741.9L498.2 744.2z"/><path d="M570.0 754.0L572.2 741.9L577.3 744.1z"/><path d="M647.6 754.0L648.5 741.7L653.8 743.4z"/><path d="M351.0 775.0v7h-1v4h5v-4h-1v-7z"/><path d="M351.0 855.0v-7h-1v-4h5v4h-1v7z"/><path d="M375.0 878.0h7v-1h4v5h-4v-1h-7z"/><path d="M485.0 878.0h-7v-1h-4v5h4v-1h7z"/><path d="M492.0 878.0h7v-1h4v5h-4v-1h-7z"/><path d="M562.0 878.0h-7v-1h-4v5h4v-1h7z"/><path d="M763.0 878.0h7v-1h4v5h-4v-1h-7z"/><path d="M892.0 878.0h-7v-1h-4v5h4v-1h7z"/><path d="M899.0 722.0h7v-1h4v5h-4v-1h-7z"/><path d="M970.0 722.0h-7v-1h-4v5h4v-1h7z"/><path d="M892.0 750.0h-7v-1h-4v5h4v-1h7z"/><path d="M938.0 750.0h7v-1h4v5h-4v-1h-7z"/><path d="M970.0 739.0h-7v-1h-4v5h4v-1h7z"/><path d="M1035.0 739.0h7v-1h4v5h-4v-1h-7z"/><path d="M1028.0 721.0h-7v-1h-4v5h4v-1h7z"/><path d="M1093.0 721.0h7v-1h4v5h-4v-1h-7z"/><path d="M764.5 780.0L771.1 790.4L765.8 792.3z"/><path d="M901.0 780.0L907.3 790.6L902.0 792.3z"/><path d="M937.4 780.0L943.8 790.5L938.5 792.3z"/><path d="M976.4 780.0L982.8 790.5L977.5 792.3z"/><path d="M1037.8 780.4L1044.1 791.0L1038.8 792.7z"/><path d="M1092.5 780.4L1098.9 790.9L1093.6 792.7z"/><path d="M1190.0 770.0h7v-1h4v5h-4v-1h-7z"/><path d="M1300.0 770.0h-7v-1h-4v5h4v-1h7z"/><path d="M1170.0 797.0h-7v-1h-4v5h4v-1h7z"/><path d="M1204.0 797.0h7v-1h4v5h-4v-1h-7z"/><path d="M1190.6 757.0L1190.9 744.7L1196.3 746.1z"/></g><g fill="#14148a" stroke="#14148a" stroke-width="0.3" font-family="Liberation Sans" font-size="14.2px"><text transform="translate(570.0 239.9) scale(0.87 1)" text-anchor="middle">10.25 &quot;</text><text transform="translate(1104.0 239.9) scale(0.87 1)" text-anchor="middle">10.25 &quot;</text><text transform="translate(485.0 272.9) scale(0.87 1)" text-anchor="middle">5.85 &quot;</text><text transform="translate(1190.0 272.9) scale(0.87 1)" text-anchor="middle">5.85 &quot;</text><text transform="translate(399.0 297.9) scale(0.87 1)" text-anchor="middle">1.45 &quot;</text><text transform="translate(1275.0 297.9) scale(0.87 1)" text-anchor="middle">1.45 &quot;</text><text transform="translate(495.0 297.9) scale(0.87 1)" text-anchor="middle">3.5 &quot;</text><text transform="translate(666.0 297.9) scale(0.87 1)" text-anchor="middle">3.5 &quot;</text><text transform="translate(837.0 297.9) scale(0.87 1)" text-anchor="middle">3.5 &quot;</text><text transform="translate(461.0 335.1) scale(0.87 1)" text-anchor="middle">1.75 &quot;</text><text transform="translate(973.5 337.4) scale(0.87 1)" text-anchor="middle">1.75 &quot;</text><text transform="translate(610.0 354.7) scale(0.87 1)" text-anchor="start">0.9 &quot;</text><text transform="translate(780.0 358.6) scale(0.87 1)" text-anchor="start">0.9 &quot;</text><text transform="translate(1122.0 336.4) scale(0.87 1)" text-anchor="start">0.9 &quot;</text><text transform="translate(1179.0 358.9) scale(0.87 1)" text-anchor="middle">3.5 &quot;</text><text transform="translate(540.0 331.4) scale(0.87 1)" text-anchor="start">Ø0.68 &quot;</text><text transform="translate(715.0 333.1) scale(0.87 1)" text-anchor="start">Ø0.68 &quot;</text><text transform="translate(906.0 373.1) scale(0.87 1)" text-anchor="start">Ø0.68 &quot;</text><text transform="translate(344.5 353.1) scale(0.87 1)" text-anchor="middle">1.79 &quot;</text><text transform="translate(344.5 420.1) scale(0.87 1)" text-anchor="middle">1.62 &quot;</text><text transform="translate(302.5 436.1) scale(0.87 1)" text-anchor="middle">6 &quot;</text><text transform="translate(258.1 452.6) scale(0.87 1)" text-anchor="middle">7 &quot;</text><text transform="translate(1380.4 416.4) scale(0.87 1)" text-anchor="middle">5 &quot;</text><text transform="translate(1420.0 455.1) scale(0.87 1)" text-anchor="middle">7 &quot;</text><text transform="translate(523.0 476.8) scale(0.87 1)" text-anchor="middle">7.65 &quot;</text><text transform="translate(719.0 480.3) scale(0.87 1)" text-anchor="start">Ø0.47 &quot;</text><text transform="translate(702.0 542.7) scale(0.87 1)" text-anchor="middle">2.14 &quot;</text><text transform="translate(1041.0 472.0) scale(0.87 1)" text-anchor="middle">13.5 &quot;</text><text transform="translate(1245.0 494.4) scale(0.87 1)" text-anchor="middle">3 &quot;</text><text transform="translate(831.0 540.5) scale(0.87 1)" text-anchor="start">Ø0.68 &quot;</text><text transform="translate(1091.0 544.1) scale(0.87 1)" text-anchor="start">Ø0.68 &quot;</text><text transform="translate(1245.0 530.1) scale(0.87 1)" text-anchor="start">Ø2.25 &quot;</text><text transform="translate(429.0 520.4) scale(0.87 1)" text-anchor="middle">3 &quot;</text><text transform="translate(386.0 533.9) scale(0.87 1)" text-anchor="start">Ø0.14 &quot;</text><text transform="translate(535.0 498.1) scale(0.87 1)" text-anchor="start">Ø0.87 &quot;</text><text transform="translate(553.8 5.1) scale(0.87 1)" text-anchor="middle"></text><text transform="translate(535.0 523.6) scale(0.87 1)" text-anchor="middle">1.4 &quot;</text><text transform="translate(487.5 649.6) scale(0.87 1)" text-anchor="middle">1.4 &quot;</text><text transform="translate(603.0 562.6) scale(0.87 1)" text-anchor="start">0.3 &quot;</text><text transform="translate(705.6 652.1) scale(0.87 1)" text-anchor="start">0.9 &quot;</text><text transform="translate(643.5 663.7) scale(0.87 1)" text-anchor="middle">1.4 &quot;</text><text transform="translate(847.0 667.7) scale(0.87 1)" text-anchor="middle">3.5 &quot;</text><text transform="translate(983.0 667.7) scale(0.87 1)" text-anchor="middle">3.5 &quot;</text><text transform="translate(1119.0 667.7) scale(0.87 1)" text-anchor="middle">3.48 &quot;</text><text transform="translate(1245.0 667.7) scale(0.87 1)" text-anchor="middle">3 &quot;</text><text transform="translate(824.7 712.1) scale(0.87 1)" text-anchor="start">Ø0.68 &quot;</text><text transform="translate(1196.0 696.4) scale(0.87 1)" text-anchor="middle">5.5 &quot;</text><text transform="translate(683.7 705.1) scale(0.87 1)" text-anchor="start">Ø0.87 &quot;</text><text transform="translate(352.4 819.1) scale(0.87 1)" text-anchor="middle">2.25 &quot;</text><text transform="translate(429.5 882.7) scale(0.87 1)" text-anchor="middle">3 &quot;</text><text transform="translate(526.0 882.7) scale(0.87 1)" text-anchor="middle">2 &quot;</text><text transform="translate(828.0 882.7) scale(0.87 1)" text-anchor="middle">3.5 &quot;</text><text transform="translate(934.5 726.9) scale(0.87 1)" text-anchor="middle">2 &quot;</text><text transform="translate(914.0 755.5) scale(0.87 1)" text-anchor="middle">1 &quot;</text><text transform="translate(1002.0 745.3) scale(0.87 1)" text-anchor="middle">1.5 &quot;</text><text transform="translate(1060.0 726.4) scale(0.87 1)" text-anchor="middle">1.5 &quot;</text><text transform="translate(1131.0 840.1) scale(0.87 1)" text-anchor="start">Ø0.47 &quot;</text><text transform="translate(1245.0 774.5) scale(0.87 1)" text-anchor="middle">3 &quot;</text><text transform="translate(1225.0 802.1) scale(0.87 1)" text-anchor="start">0.7 &quot;</text><text transform="translate(1220.3 725.1) scale(0.87 1)" text-anchor="start">Ø0.76 &quot;</text></g></g></svg><div class="ab" style="left:1662px;top:214px;width:18px;height:705px;background:#6f6f6f;border-left:1px solid #ddd"></div><div class="ab" style="left:1663px;top:214px;width:17px;height:16px;background:#545454"></div><svg class="ic" style="left:1667px;top:219px" width="9" height="5" viewBox="0 0 9 5"><path d="M0 5h9L4.5 0z" fill="#eee"/></svg><div class="ab" style="left:1663px;top:885px;width:17px;height:16px;background:#545454"></div><svg class="ic" style="left:1667px;top:891px" width="9" height="5" viewBox="0 0 9 5"><path d="M0 0h9L4.5 5z" fill="#eee"/></svg><div class="ab" style="left:1663px;top:440px;width:17px;height:84px;background:#565656;border:1px solid #4a4a4a"></div><div class="ab" style="left:1663px;top:901px;width:17px;height:18px;background:#4e4e4e"></div><div class="ab" style="left:16px;top:900px;width:1646px;height:19px;background:#6f6f6f;border-top:1px solid #bdbdbd"></div><div class="ab" style="left:16px;top:902px;width:167px;height:16px;background:#4d4d4d"></div><div class="ab" style="left:22px;top:902px;width:65px;height:16px;background:#5f5f5f;border:1px solid #3a3a3a;border-top:none;border-radius:0 0 4px 4px"></div><div class="ab" style="left:88px;top:902px;width:68px;height:15px;background:#555;border-radius:0 0 4px 4px"></div><svg class="ic" style="left:27px;top:903px" width="14" height="14" viewBox="0 0 14 14"><rect x="1" y="1" width="8" height="7" fill="#ddd" stroke="#222"/><circle cx="8.5" cy="9" r="4.5" fill="#bbb" stroke="#222"/></svg><div class="t" style="left:43px;top:903px;color:#eee">Model</div><svg class="ic" style="left:95px;top:903px" width="11" height="14" viewBox="0 0 11 14"><path d="M1 1h6l3 3v9H1z" fill="#fff" stroke="#222"/><text x="3" y="11" font-size="7" fill="#0000a0" font-family="Liberation Sans">1</text></svg><div class="t" style="left:109px;top:903px;color:#b4b4b4">Paper 1</div><div class="ab" style="left:183px;top:902px;width:3px;height:16px;background:#f4f4f4"></div><div class="ab" style="left:186px;top:902px;width:17px;height:16px;background:#4e4e4e"></div><svg class="ic" style="left:192px;top:906px" width="5" height="8" viewBox="0 0 5 8"><path d="M5 0v8L0 4z" fill="#eee"/></svg><div class="ab" style="left:917px;top:902px;width:208px;height:17px;background:#575757;border:1px solid #3c3c3c"></div><div class="ab" style="left:1645px;top:902px;width:17px;height:16px;background:#4e4e4e"></div><svg class="ic" style="left:1652px;top:906px" width="5" height="8" viewBox="0 0 5 8"><path d="M0 0v8l5-4z" fill="#eee"/></svg><div class="ab" style="left:0px;top:919px;width:1680px;height:42px;background:#474747;border-top:1px solid #8a8a8a"></div><div class="ab" style="left:100px;top:920px;width:972px;height:39px;background:#565656"></div><div class="ab" style="left:6px;top:925px;width:2px;height:2px;background:#888"></div><div class="ab" style="left:6px;top:929px;width:2px;height:2px;background:#888"></div><div class="ab" style="left:6px;top:933px;width:2px;height:2px;background:#888"></div><div class="ab" style="left:6px;top:937px;width:2px;height:2px;background:#888"></div><div class="ab" style="left:6px;top:941px;width:2px;height:2px;background:#888"></div><div class="ab" style="left:6px;top:945px;width:2px;height:2px;background:#888"></div><div class="ab" style="left:6px;top:949px;width:2px;height:2px;background:#888"></div><svg class="ic" style="left:12px;top:929px" width="26" height="24" viewBox="0 0 26 24"><path d="M5 8v8c0 3 3 4 6 4h8" fill="none" stroke="#e22" stroke-width="2"/><circle cx="5" cy="13" r="2.2" fill="#e22"/><circle cx="13" cy="20" r="2.2" fill="#e22"/><path d="M8 7l9 9" stroke="#ccc" stroke-width="1.3"/><path d="M8 8l2-1" stroke="#ee0" stroke-width="2"/><path d="M14 3l1 2 2 1-2 1-1 2-1-2-2-1 2-1zM19 5l.8 1.5 1.5.8-1.5.8L19 9.5l-.8-1.5L16.7 7.3l1.5-.8zM20 11l.8 1.5 1.5.8-1.5.8-.8 1.5-.8-1.5-1.5-.8 1.5-.8z" fill="#eee"/></svg><svg class="ic" style="left:43px;top:931px" width="18" height="18" viewBox="0 0 18 18"><path d="M2 2l14 14M16 2L2 16" stroke="#999" stroke-width="2.5"/></svg><svg class="ic" style="left:69px;top:931px" width="22" height="19" viewBox="0 0 22 19"><rect x="1" y="1" width="19" height="17" fill="none" stroke="#aaa" stroke-width="1.2"/><path d="M1 5h19" stroke="#aaa" stroke-width="2"/><path d="M3 8h15M3 11h15M3 14h15" stroke="#aaa" stroke-width="2" stroke-dasharray="4 1"/></svg><div class="ab" style="left:96px;top:924px;width:1px;height:32px;background:#222;border-right:1px solid #777"></div><div class="t" style="left:102px;top:923px;color:#f0f0f0;width:56px;overflow:hidden">Scale X</div><div class="ab" style="left:103px;top:937px;width:53px;height:21px;border:1px solid #8c8c8c;background:#575757"></div><div class="t" style="left:107px;top:940px;color:#7a7a7a">1</div><div class="ab" style="left:139px;top:938px;width:16px;height:10px;border:1px solid #1e1e1e;background:#575757"></div><div class="ab" style="left:139px;top:948px;width:16px;height:10px;border:1px solid #1e1e1e;background:#575757"></div><svg class="ic" style="left:144px;top:941px" width="6" height="3" viewBox="0 0 6 3"><path d="M0 3h6L3 0z" fill="#ddd"/></svg><svg class="ic" style="left:144px;top:952px" width="6" height="3" viewBox="0 0 6 3"><path d="M0 0h6L3 3z" fill="#ddd"/></svg><div class="t" style="left:159px;top:923px;color:#f0f0f0;width:56px;overflow:hidden">Scale Y</div><div class="ab" style="left:160px;top:937px;width:53px;height:21px;border:1px solid #8c8c8c;background:#575757"></div><div class="t" style="left:164px;top:940px;color:#7a7a7a">1</div><div class="ab" style="left:196px;top:938px;width:16px;height:10px;border:1px solid #1e1e1e;background:#575757"></div><div class="ab" style="left:196px;top:948px;width:16px;height:10px;border:1px solid #1e1e1e;background:#575757"></div><svg class="ic" style="left:201px;top:941px" width="6" height="3" viewBox="0 0 6 3"><path d="M0 3h6L3 0z" fill="#ddd"/></svg><svg class="ic" style="left:201px;top:952px" width="6" height="3" viewBox="0 0 6 3"><path d="M0 0h6L3 3z" fill="#ddd"/></svg><div class="t" style="left:216px;top:923px;color:#f0f0f0;width:56px;overflow:hidden">Scale Z</div><div class="ab" style="left:217px;top:937px;width:53px;height:21px;border:1px solid #8c8c8c;background:#575757"></div><div class="t" style="left:221px;top:940px;color:#7a7a7a">1</div><div class="ab" style="left:253px;top:938px;width:16px;height:10px;border:1px solid #1e1e1e;background:#575757"></div><div class="ab" style="left:253px;top:948px;width:16px;height:10px;border:1px solid #1e1e1e;background:#575757"></div><svg class="ic" style="left:258px;top:941px" width="6" height="3" viewBox="0 0 6 3"><path d="M0 3h6L3 0z" fill="#ddd"/></svg><svg class="ic" style="left:258px;top:952px" width="6" height="3" viewBox="0 0 6 3"><path d="M0 0h6L3 3z" fill="#ddd"/></svg><div class="t" style="left:273px;top:923px;color:#f0f0f0;width:56px;overflow:hidden">Size X</div><div class="ab" style="left:274px;top:937px;width:53px;height:21px;border:1px solid #8c8c8c;background:#575757"></div><div class="t" style="left:278px;top:940px;color:#7a7a7a">0 in</div><div class="t" style="left:330px;top:923px;color:#f0f0f0;width:56px;overflow:hidden">Size Y</div><div class="ab" style="left:331px;top:937px;width:53px;height:21px;border:1px solid #8c8c8c;background:#575757"></div><div class="t" style="left:335px;top:940px;color:#7a7a7a">0 in</div><div class="t" style="left:387px;top:923px;color:#f0f0f0;width:56px;overflow:hidden">Size Z</div><div class="ab" style="left:388px;top:937px;width:53px;height:21px;border:1px solid #8c8c8c;background:#575757"></div><div class="t" style="left:392px;top:940px;color:#7a7a7a">0 in</div><div class="t" style="left:444px;top:923px;color:#f0f0f0;width:56px;overflow:hidden">Pos X</div><div class="ab" style="left:445px;top:937px;width:53px;height:21px;border:1px solid #8c8c8c;background:#575757"></div><div class="t" style="left:449px;top:940px;color:#7a7a7a">0 in</div><div class="t" style="left:501px;top:923px;color:#f0f0f0;width:56px;overflow:hidden">Pos Y</div><div class="ab" style="left:502px;top:937px;width:53px;height:21px;border:1px solid #8c8c8c;background:#575757"></div><div class="t" style="left:506px;top:940px;color:#7a7a7a">0 in</div><div class="t" style="left:558px;top:923px;color:#f0f0f0;width:56px;overflow:hidden">Pos Z</div><div class="ab" style="left:559px;top:937px;width:53px;height:21px;border:1px solid #8c8c8c;background:#575757"></div><div class="t" style="left:563px;top:940px;color:#7a7a7a">0 in</div><div class="t" style="left:615px;top:923px;color:#f0f0f0;width:56px;overflow:hidden">Delta X</div><div class="ab" style="left:616px;top:937px;width:53px;height:21px;border:1px solid #8c8c8c;background:#575757"></div><div class="t" style="left:620px;top:940px;color:#7a7a7a">0 in</div><div class="t" style="left:672px;top:923px;color:#f0f0f0;width:56px;overflow:hidden">Delta Y</div><div class="ab" style="left:673px;top:937px;width:53px;height:21px;border:1px solid #8c8c8c;background:#575757"></div><div class="t" style="left:677px;top:940px;color:#7a7a7a">0 in</div><div class="t" style="left:729px;top:923px;color:#f0f0f0;width:56px;overflow:hidden">Delta Z</div><div class="ab" style="left:730px;top:937px;width:53px;height:21px;border:1px solid #8c8c8c;background:#575757"></div><div class="t" style="left:734px;top:940px;color:#7a7a7a">0 in</div><div class="t" style="left:786px;top:923px;color:#f0f0f0;width:56px;overflow:hidden">Rot X</div><div class="ab" style="left:787px;top:937px;width:53px;height:21px;border:1px solid #8c8c8c;background:#575757"></div><div class="t" style="left:791px;top:940px;color:#7a7a7a">0</div><div class="ab" style="left:823px;top:938px;width:16px;height:10px;border:1px solid #1e1e1e;background:#575757"></div><div class="ab" style="left:823px;top:948px;width:16px;height:10px;border:1px solid #1e1e1e;background:#575757"></div><svg class="ic" style="left:828px;top:941px" width="6" height="3" viewBox="0 0 6 3"><path d="M0 3h6L3 0z" fill="#ddd"/></svg><svg class="ic" style="left:828px;top:952px" width="6" height="3" viewBox="0 0 6 3"><path d="M0 0h6L3 3z" fill="#ddd"/></svg><div class="t" style="left:843px;top:923px;color:#f0f0f0;width:56px;overflow:hidden">Rot Y</div><div class="ab" style="left:844px;top:937px;width:53px;height:21px;border:1px solid #8c8c8c;background:#575757"></div><div class="t" style="left:848px;top:940px;color:#7a7a7a">0</div><div class="ab" style="left:880px;top:938px;width:16px;height:10px;border:1px solid #1e1e1e;background:#575757"></div><div class="ab" style="left:880px;top:948px;width:16px;height:10px;border:1px solid #1e1e1e;background:#575757"></div><svg class="ic" style="left:885px;top:941px" width="6" height="3" viewBox="0 0 6 3"><path d="M0 3h6L3 0z" fill="#ddd"/></svg><svg class="ic" style="left:885px;top:952px" width="6" height="3" viewBox="0 0 6 3"><path d="M0 0h6L3 3z" fill="#ddd"/></svg><div class="t" style="left:900px;top:923px;color:#f0f0f0;width:56px;overflow:hidden">Rot Z</div><div class="ab" style="left:901px;top:937px;width:53px;height:21px;border:1px solid #8c8c8c;background:#575757"></div><div class="t" style="left:905px;top:940px;color:#7a7a7a">0</div><div class="ab" style="left:937px;top:938px;width:16px;height:10px;border:1px solid #1e1e1e;background:#575757"></div><div class="ab" style="left:937px;top:948px;width:16px;height:10px;border:1px solid #1e1e1e;background:#575757"></div><svg class="ic" style="left:942px;top:941px" width="6" height="3" viewBox="0 0 6 3"><path d="M0 3h6L3 0z" fill="#ddd"/></svg><svg class="ic" style="left:942px;top:952px" width="6" height="3" viewBox="0 0 6 3"><path d="M0 0h6L3 3z" fill="#ddd"/></svg><div class="t" style="left:957px;top:923px;color:#f0f0f0;width:56px;overflow:hidden">Delta Dist:</div><div class="ab" style="left:958px;top:937px;width:53px;height:21px;border:1px solid #8c8c8c;background:#575757"></div><div class="t" style="left:962px;top:940px;color:#7a7a7a">0 in</div><div class="t" style="left:1014px;top:923px;color:#f0f0f0;width:56px;overflow:hidden">Delta Ang</div><div class="ab" style="left:1015px;top:937px;width:53px;height:21px;border:1px solid #8c8c8c;background:#575757"></div><div class="t" style="left:1019px;top:940px;color:#7a7a7a">0</div><div class="ab" style="left:1051px;top:938px;width:16px;height:10px;border:1px solid #1e1e1e;background:#575757"></div><div class="ab" style="left:1051px;top:948px;width:16px;height:10px;border:1px solid #1e1e1e;background:#575757"></div><svg class="ic" style="left:1056px;top:941px" width="6" height="3" viewBox="0 0 6 3"><path d="M0 3h6L3 0z" fill="#ddd"/></svg><svg class="ic" style="left:1056px;top:952px" width="6" height="3" viewBox="0 0 6 3"><path d="M0 0h6L3 3z" fill="#ddd"/></svg><div class="ab" style="left:1074px;top:924px;width:1px;height:32px;background:#222;border-right:1px solid #777"></div><svg class="ic" style="left:1077px;top:929px" width="22" height="22" viewBox="0 0 22 22"><path d="M1 11l4-3h7l-4 3zM1 11v8h7v-8M8 19l4-3V8" fill="none" stroke="#f4f4f4" stroke-width="1.3"/><path d="M3 13l3 4" stroke="#bbb"/><path d="M6 8c2-4 6-5 10-5h3v4h-3c-3 0-5 1-7 3" fill="#999" stroke="#f4f4f4" stroke-width="1.2"/></svg><svg class="ic" style="left:1106px;top:929px" width="22" height="22" viewBox="0 0 22 22"><rect x="2" y="1" width="7" height="7" fill="none" stroke="#f4f4f4" stroke-width="1.3"/><path d="M4 20L17 3" stroke="#ccc" stroke-width="1.1"/><path d="M10 12l3-3h6l-3 3zM10 12v8h6v-8M16 20l3-3V9" fill="none" stroke="#f4f4f4" stroke-width="1.3"/><path d="M11 14l4 4" stroke="#aaa"/></svg><svg class="ic" style="left:1134px;top:929px" width="22" height="22" viewBox="0 0 22 22"><path d="M2 15C2 9 5 7 9 7c3 0 6-1 6-4" fill="none" stroke="#eee" stroke-width="1.3"/><circle cx="9" cy="7" r="2.3" fill="#6fa6f2"/><path d="M11 10v9l2-2 2 4 1.5-.8-2-4h3z" fill="#fff" stroke="#333" stroke-width="0.6"/></svg><div class="ab" style="left:1162px;top:926px;width:1px;height:28px;background:#2a2a2a;border-right:1px solid #666"></div><div class="ab" style="left:1166px;top:927px;width:26px;height:26px;background:#5e7aa3"></div><svg class="ic" style="left:1169px;top:929px" width="22" height="22" viewBox="0 0 22 22"><rect x="2" y="2" width="16" height="16" fill="#00e000" stroke="#f4f4f4" stroke-width="1.6"/><path d="M2.8 2.8L17.2 17.2H2.8z" fill="#0a6e72"/><path d="M17 3v14" stroke="#222" stroke-dasharray="1 1"/></svg><svg class="ic" style="left:1197px;top:929px" width="22" height="22" viewBox="0 0 22 22"><path d="M3 3v15h15z" fill="#0a6e72" stroke="#f4f4f4" stroke-width="1.6"/><rect x="10" y="1" width="10" height="7" fill="#555"/><text x="10.5" y="7.5" font-size="7" font-weight="bold" fill="#f4f4f4" font-family="Liberation Sans">MP</text></svg><svg class="ic" style="left:1225px;top:929px" width="22" height="22" viewBox="0 0 22 22"><path d="M3 3v15h15z" fill="#00e000" stroke="#f4f4f4" stroke-width="1.6" stroke-dasharray="2 1"/><rect x="10" y="1" width="8" height="7" fill="#555"/><text x="11" y="7.5" font-size="7" font-weight="bold" fill="#f4f4f4" font-family="Liberation Sans">P</text></svg><svg class="ic" style="left:1253px;top:929px" width="22" height="22" viewBox="0 0 22 22"><path d="M3 5h7v6h3v7H8v-4H3z" fill="#00e000" stroke="#f4f4f4" stroke-width="1.6"/><rect x="13" y="1" width="7" height="8" fill="#555"/><text x="14" y="8" font-size="7" font-weight="bold" fill="#f4f4f4" font-family="Liberation Sans">E</text></svg><div class="ab" style="left:1279px;top:926px;width:1px;height:28px;background:#2a2a2a;border-right:1px solid #666"></div><svg class="ic" style="left:1287px;top:929px" width="22" height="22" viewBox="0 0 22 22"><path d="M4 9c1-5 9-6 12-2" fill="none" stroke="#20d040" stroke-width="2.4"/><path d="M1 6l4 6 4-5z" fill="#20d040"/><path d="M11 8v10l2-2 2 4 1.5-.8-2-4h3z" fill="#fff" stroke="#333" stroke-width="0.6"/></svg><svg class="ic" style="left:1316px;top:929px" width="22" height="22" viewBox="0 0 22 22"><path d="M5 3l8 7" stroke="#222"/><path d="M3 4h6l3 5z" fill="#e01010"/><path d="M11 17l7-6v6z" fill="#6fa6f2"/><path d="M2 2l2 2M4 2L2 4M9 1l2 2M11 1L9 3M10 9l2 2M12 9l-2 2M17 9l2 2M19 9l-2 2M4 16l2 2M6 16l-2 2M17 17l2 2M19 17l-2 2" stroke="#e0e040" stroke-width="0.9"/></svg><svg class="ic" style="left:1343px;top:929px" width="22" height="22" viewBox="0 0 22 22"><path d="M6 2L1 14h10z" fill="none" stroke="#f4f4f4" stroke-width="1.5"/><path d="M13 7l-5 11h11z" fill="none" stroke="#e01010" stroke-width="2"/></svg><svg class="ic" style="left:1370px;top:929px" width="22" height="22" viewBox="0 0 22 22"><rect x="6" y="3" width="8" height="5" fill="#999"/><path d="M2 12h16l-2 6H4z" fill="none" stroke="#999" stroke-width="1.4"/><path d="M10 8v4" stroke="#999"/></svg><svg class="ic" style="left:1398px;top:929px" width="22" height="22" viewBox="0 0 22 22"><rect x="2" y="2" width="17" height="17" fill="none" stroke="#aaa" stroke-width="1.4"/><path d="M3 19L19 2" stroke="#e22" stroke-width="1.6"/><circle cx="3" cy="3" r="2" fill="#6fa6f2"/><circle cx="5" cy="17" r="2" fill="#6fa6f2"/></svg><svg class="ic" style="left:1426px;top:929px" width="22" height="22" viewBox="0 0 22 22"><rect x="2" y="2" width="17" height="17" fill="none" stroke="#aaa" stroke-width="1.4"/><circle cx="10.5" cy="10.5" r="4" fill="#aaa"/><path d="M10.5 3v15M3 10.5h15" stroke="#aaa"/></svg><svg class="ic" style="left:1454px;top:929px" width="22" height="22" viewBox="0 0 22 22"><path d="M3 10h8v9H3zM11 10l4-4v-4h5" fill="none" stroke="#aaa" stroke-width="1.4"/><rect x="6" y="13" width="3" height="3" fill="#aaa"/></svg><svg class="ic" style="left:1482px;top:929px" width="22" height="22" viewBox="0 0 22 22"><path d="M3 10h8v9H3zM11 10l6-5h3" fill="none" stroke="#aaa" stroke-width="1.4"/><rect x="6" y="13" width="3" height="3" fill="#aaa"/></svg><svg class="ic" style="left:1510px;top:929px" width="22" height="22" viewBox="0 0 22 22"><path d="M2 6l5-4h9l-5 4zM11 6v4M6 10h9v8H6z" fill="none" stroke="#aaa" stroke-width="1.4"/></svg><svg class="ic" style="left:1538px;top:929px" width="22" height="22" viewBox="0 0 22 22"><path d="M6 6l5-4h9l-5 4zM8 6v4M2 10h9v8H2z" fill="none" stroke="#aaa" stroke-width="1.4"/></svg><svg class="ic" style="left:1566px;top:929px" width="22" height="22" viewBox="0 0 22 22"><path d="M3 10h8v9H3zM11 14h4" fill="none" stroke="#aaa" stroke-width="1.4"/><circle cx="16" cy="6" r="3" fill="#aaa"/><rect x="6" y="3" width="4" height="5" fill="#aaa"/></svg><svg class="ic" style="left:1594px;top:929px" width="22" height="22" viewBox="0 0 22 22"><path d="M3 10l12-6M3 18h13V4" fill="none" stroke="#eee" stroke-width="1.5"/><path d="M3 10l12-6" stroke="#e22" stroke-width="1.6"/><rect x="1" y="8" width="4" height="4" fill="#6fa6f2"/><rect x="14" y="2" width="4" height="4" fill="#6fa6f2"/><rect x="1" y="16" width="4" height="4" fill="#6fa6f2"/><rect x="14" y="16" width="4" height="4" fill="#6fa6f2"/></svg><svg class="ic" style="left:1622px;top:929px" width="22" height="22" viewBox="0 0 22 22"><rect x="2" y="2" width="17" height="17" fill="none" stroke="#aaa" stroke-width="1.8"/><rect x="5" y="5" width="11" height="11" fill="none" stroke="#ddd" stroke-width="1.4"/><path d="M3 19L19 3" stroke="#e22" stroke-width="1.6"/><circle cx="5" cy="5" r="2" fill="#6fa6f2"/><circle cx="16" cy="16" r="2" fill="#6fa6f2"/></svg><div class="ab" style="left:0px;top:961px;width:1680px;height:25px;background:#545454;border-top:1px solid #3e3e3e"></div><div class="t" style="left:8px;top:964px;">Select object(s)</div><div class="t" style="left:1213px;top:967px;">SNAP</div><div class="t" style="left:1251px;top:967px;">GEO</div><svg class="ic" style="left:1290px;top:965px" width="9" height="20" viewBox="0 0 9 20"><rect x="1" y="1" width="6" height="6" fill="none" stroke="#bbb"/><text x="1" y="18" font-size="8" fill="#bbb" font-family="Liberation Sans">X</text></svg><div class="ab" style="left:1300px;top:965px;width:73px;height:19px;border:1px solid #8c8c8c;background:#2a2a2a"></div><div class="t" style="left:1304px;top:968px;color:#f0f0f0">7.4618 in</div><svg class="ic" style="left:1382px;top:965px" width="9" height="20" viewBox="0 0 9 20"><rect x="1" y="1" width="6" height="6" fill="none" stroke="#bbb"/><text x="1" y="18" font-size="8" fill="#bbb" font-family="Liberation Sans">Y</text></svg><div class="ab" style="left:1392px;top:965px;width:73px;height:19px;border:1px solid #8c8c8c;background:#2a2a2a"></div><div class="t" style="left:1396px;top:968px;color:#f0f0f0">10.0673 in</div><svg class="ic" style="left:1474px;top:965px" width="9" height="20" viewBox="0 0 9 20"><rect x="1" y="1" width="6" height="6" fill="none" stroke="#bbb"/><text x="1" y="18" font-size="8" fill="#bbb" font-family="Liberation Sans">Z</text></svg><div class="ab" style="left:1484px;top:965px;width:73px;height:19px;border:1px solid #8c8c8c;background:#2a2a2a"></div><div class="t" style="left:1488px;top:968px;color:#8a8a8a">0.3089 in</div><div class="t" style="left:1566px;top:964px;">138%</div><div class="t" style="left:1622px;top:964px;">11:59 AM</div></body></html>
